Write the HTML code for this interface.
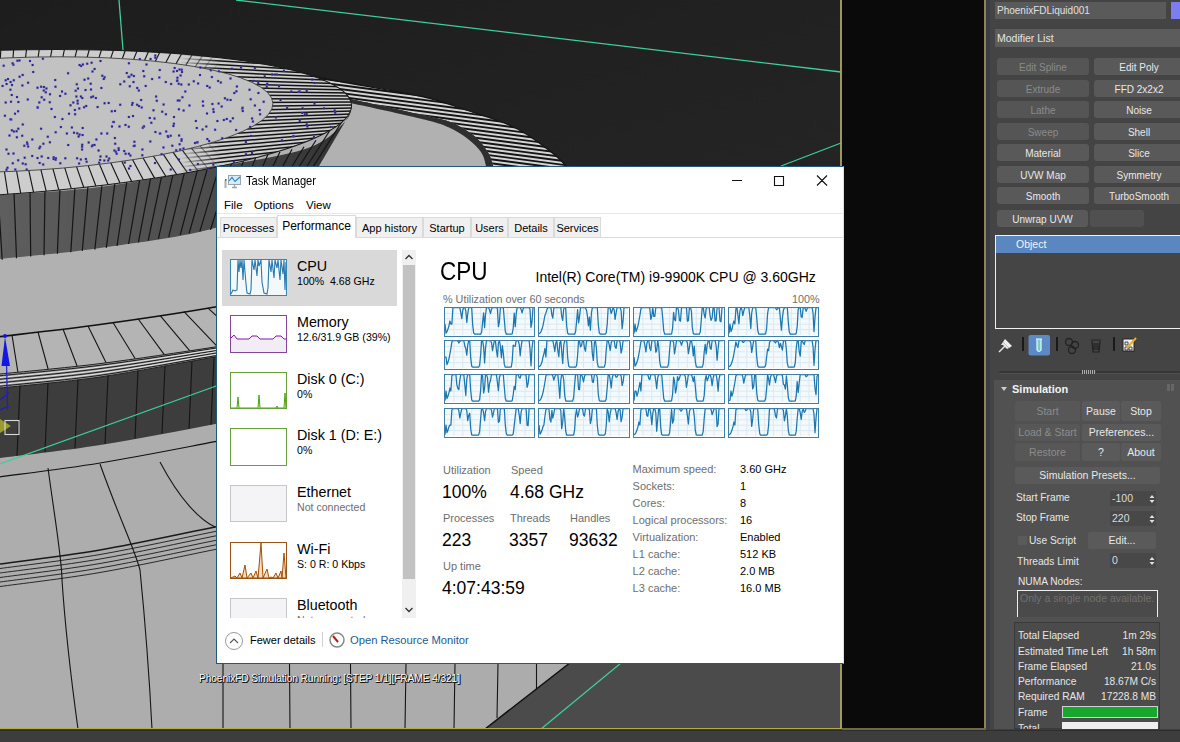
<!DOCTYPE html>
<html><head><meta charset="utf-8"><style>
*{margin:0;padding:0}
body{width:1180px;height:742px;overflow:hidden;position:relative;background:#3d3d3d;font-family:"Liberation Sans",sans-serif}
.abs{position:absolute}
#tm{position:absolute;left:216px;top:166px;width:628px;height:497.5px;background:#fff;box-sizing:border-box;border:1px solid #23587a;border-right-color:#cfe6ee;overflow:hidden;color:#000}
#tm div{position:absolute;white-space:nowrap}
.tmname{font-size:14.3px;line-height:16px}
.tmsub{font-size:10.6px;line-height:13px}
.lbl{font-size:11px;line-height:14px;color:#6e6e6e}
.val{font-size:11px;line-height:14px;color:#000}
.big{font-size:17.5px;line-height:20px;color:#000}
.tab{height:20px;top:50px;box-sizing:border-box;border:1px solid #dadada;border-bottom:none;background:#f0f0f0;font-size:11px;line-height:20px;text-align:center}
#rp{position:absolute;left:986px;top:0;width:194px;height:729px;background:#444;overflow:hidden;color:#ddd;font-family:"Liberation Sans",sans-serif}
#rp div{position:absolute;white-space:nowrap;box-sizing:border-box}
.btn{background:#595959;border-radius:3px;height:17px;font-size:10px;line-height:19px;text-align:center;color:#e8e8e8}
.btn.dis{color:#8a8a8a;background:#555}
.sbtn{background:#5a5a5a;border-radius:2px;height:18px;font-size:10.5px;line-height:18px;text-align:center;color:#e8e8e8}
.sbtn.dis{color:#8c8c8c;background:#575757}
.lab{font-size:10.2px;line-height:16px;color:#e6e6e6}
.spin{background:#484848;height:15px;font-size:10.5px;line-height:15px;color:#dcdcdc;padding-left:2px}

</style></head><body>
<svg width="842" height="729" viewBox="0 0 842 729" style="position:absolute;left:0;top:0">
<defs><linearGradient id="bg" x1="0" y1="0" x2="0.3" y2="1"><stop offset="0" stop-color="#1d1d1d"/><stop offset="1" stop-color="#2c2c2c"/></linearGradient></defs>
<defs><linearGradient id="wallg" x1="0" y1="0" x2="1" y2="0" gradientUnits="objectBoundingBox"><stop offset="0" stop-color="#5e5e5e"/><stop offset="0.6" stop-color="#4c4c4c"/><stop offset="1" stop-color="#303030"/></linearGradient></defs>
<rect x="0" y="0" width="842" height="729" fill="url(#bg)"/>
<path d="M470,729 L590,640 L842,640 L842,729 Z" fill="#4b4b4b"/>
<path d="M250.0,62.0 C256.7,63.3 276.3,67.0 290.0,70.0 C303.7,73.0 310.3,75.7 332.0,80.0 C353.7,84.3 397.7,91.0 420.0,96.0 C442.3,101.0 450.8,105.0 466.0,110.0 C481.2,115.0 498.8,120.2 511.5,126.0 C524.2,131.8 533.1,138.5 542.0,145.0 C550.9,151.5 559.5,157.5 565.0,165.0 C570.5,172.5 573.3,185.8 575.0,190.0 L496,190 L497.0,190.0 C496.3,186.0 494.7,172.5 493.0,166.0 C491.3,159.5 490.3,156.2 487.0,151.0 C483.7,145.8 479.2,139.8 473.0,135.0 C466.8,130.2 458.8,125.4 450.0,122.0 C441.2,118.6 436.7,118.3 420.0,114.5 C403.3,110.7 370.0,103.1 350.0,99.0 C330.0,94.9 308.3,91.5 300.0,90.0 Z" fill="#d4d4d4"/>
<clipPath id="ringclip"><path d="M250.0,62.0 C256.7,63.3 276.3,67.0 290.0,70.0 C303.7,73.0 310.3,75.7 332.0,80.0 C353.7,84.3 397.7,91.0 420.0,96.0 C442.3,101.0 450.8,105.0 466.0,110.0 C481.2,115.0 498.8,120.2 511.5,126.0 C524.2,131.8 533.1,138.5 542.0,145.0 C550.9,151.5 559.5,157.5 565.0,165.0 C570.5,172.5 573.3,185.8 575.0,190.0 L496,190 L497.0,190.0 C496.3,186.0 494.7,172.5 493.0,166.0 C491.3,159.5 490.3,156.2 487.0,151.0 C483.7,145.8 479.2,139.8 473.0,135.0 C466.8,130.2 458.8,125.4 450.0,122.0 C441.2,118.6 436.7,118.3 420.0,114.5 C403.3,110.7 370.0,103.1 350.0,99.0 C330.0,94.9 308.3,91.5 300.0,90.0 Z"/></clipPath>
<g clip-path="url(#ringclip)"><path d="M280,34.4 L600,76.0 M280,38.3 L600,79.9 M280,42.2 L600,83.8 M280,46.1 L600,87.7 M280,50.0 L600,91.6 M280,53.9 L600,95.5 M280,57.8 L600,99.4 M280,61.7 L600,103.3 M280,65.6 L600,107.2 M280,69.5 L600,111.1 M280,73.4 L600,115.0 M280,77.3 L600,118.9 M280,81.2 L600,122.8 M280,85.1 L600,126.7 M280,89.0 L600,130.6 M280,92.9 L600,134.5 M280,96.8 L600,138.4 M280,100.7 L600,142.3 M280,104.6 L600,146.2 M280,108.5 L600,150.1 M280,112.4 L600,154.0 M280,116.3 L600,157.9 M280,120.2 L600,161.8 M280,124.1 L600,165.7 M280,128.0 L600,169.6 M280,131.9 L600,173.5 M280,135.8 L600,177.4 M280,139.7 L600,181.3 M280,143.6 L600,185.2 M280,147.5 L600,189.1 M280,151.4 L600,193.0 M280,155.3 L600,196.9 M280,159.2 L600,200.8 M280,163.1 L600,204.7 M280,167.0 L600,208.6 M280,170.9 L600,212.5 M280,174.8 L600,216.4 M280,178.7 L600,220.3 M280,182.6 L600,224.2 M280,186.5 L600,228.1 M280,190.4 L600,232.0 M280,194.3 L600,235.9 M280,198.2 L600,239.8 M280,202.1 L600,243.7" stroke="#141414" stroke-width="1.9" fill="none"/></g>
<path d="M300.0,90.0 C308.3,91.5 330.0,94.9 350.0,99.0 C370.0,103.1 403.3,110.7 420.0,114.5 C436.7,118.3 441.2,118.6 450.0,122.0 C458.8,125.4 466.8,130.2 473.0,135.0 C479.2,139.8 483.7,145.8 487.0,151.0 C490.3,156.2 491.3,159.5 493.0,166.0 C494.7,172.5 496.3,186.0 497.0,190.0 L488,190 L490.0,190.0 C489.3,186.0 487.5,172.3 486.0,166.0 C484.5,159.7 484.0,156.5 481.0,152.0 C478.0,147.5 473.5,143.2 468.0,139.0 C462.5,134.8 456.0,130.4 448.0,127.0 C440.0,123.6 436.3,122.5 420.0,118.5 C403.7,114.5 370.0,107.1 350.0,103.0 C330.0,98.9 308.3,95.5 300.0,94.0 Z" fill="#2e2e2e"/>
<path d="M250.0,62.0 C256.7,63.3 276.3,67.0 290.0,70.0 C303.7,73.0 310.3,75.7 332.0,80.0 C353.7,84.3 397.7,91.0 420.0,96.0 C442.3,101.0 450.8,105.0 466.0,110.0 C481.2,115.0 498.8,120.2 511.5,126.0 C524.2,131.8 533.1,138.5 542.0,145.0 C550.9,151.5 559.5,157.5 565.0,165.0 C570.5,172.5 573.3,185.8 575.0,190.0" stroke="#151515" stroke-width="1.3" fill="none"/>
<path d="M300.0,94.0 C308.3,95.5 330.0,98.9 350.0,103.0 C370.0,107.1 403.7,114.5 420.0,118.5 C436.3,122.5 440.0,123.6 448.0,127.0 C456.0,130.4 462.5,134.8 468.0,139.0 C473.5,143.2 478.0,147.5 481.0,152.0 C484.0,156.5 484.5,159.7 486.0,166.0 C487.5,172.3 489.3,186.0 490.0,190.0 L492,420 L0,420 L0,150 Z" fill="#b1b1b1"/>
<path d="M0.0,195.0 C16.7,193.7 64.0,191.7 100.0,187.0 C136.0,182.3 181.3,173.5 216.0,167.0 C250.7,160.5 286.4,155.7 308.0,148.0 C329.6,140.3 338.3,128.2 345.5,121.0 C352.7,113.8 350.1,107.7 351.0,105.0 L349,115 L318.6,166.7 C310.5,171.8 287.3,186.8 270.0,197.0 C252.7,207.2 243.3,219.5 215.0,228.0 C186.7,236.5 135.8,242.8 100.0,248.0 C64.2,253.2 16.7,257.2 0.0,259.0 Z" fill="url(#wallg)"/>
<path d="M-2.0,193.0 L2.2,259.8 M14.0,191.9 L16.5,258.2 M30.0,190.6 L30.7,256.6 M45.0,189.4 L44.0,255.2 M60.0,188.2 L57.4,253.7 M75.0,187.0 L70.8,252.2 M88.0,186.0 L82.3,250.9 M102.0,184.7 L94.8,249.6 M115.0,182.4 L106.3,247.9 M127.0,180.3 L117.0,246.0 M140.0,178.1 L128.6,244.0 M151.0,176.2 L138.4,242.3 M162.0,174.3 L148.2,240.6 M173.5,172.3 L158.4,238.8 M185.0,170.3 L168.7,237.1 M198.0,168.1 L180.2,235.0 M208.0,166.4 L189.1,233.5 M220.0,164.2 L199.8,231.6 M232.0,161.7 L210.5,229.8 M244.0,159.2 L221.2,225.5 M256.0,156.7 L231.8,219.5 M268.0,154.3 L242.5,213.5 M280.0,151.8 L253.2,207.5 M292.0,149.3 L263.9,201.4 M304.0,146.8 L274.6,195.2 M316.0,140.2 L285.2,188.5 M330.0,130.2 L297.7,180.7 M342.0,121.5 L308.4,174.1" stroke="#151515" stroke-width="1.2" fill="none"/>
<ellipse cx="-41" cy="124.5" rx="393" ry="72.5" transform="rotate(-2.84 -41 124.5)" fill="#cdcdcd" stroke="#1a1a1a" stroke-width="1"/>
<defs><linearGradient id="mA" x1="0" y1="0" x2="842" y2="0" gradientUnits="userSpaceOnUse"><stop offset="0.214" stop-color="#fff"/><stop offset="0.262" stop-color="#000"/></linearGradient><linearGradient id="mB" x1="0" y1="0" x2="842" y2="0" gradientUnits="userSpaceOnUse"><stop offset="0.214" stop-color="#000"/><stop offset="0.262" stop-color="#fff"/></linearGradient><mask id="maskA" maskUnits="userSpaceOnUse" x="0" y="0" width="842" height="729"><rect x="0" y="0" width="842" height="729" fill="url(#mA)"/></mask><mask id="maskB" maskUnits="userSpaceOnUse" x="0" y="0" width="842" height="729"><rect x="0" y="0" width="842" height="729" fill="url(#mB)"/></mask><clipPath id="discclip"><ellipse cx="-41" cy="124.5" rx="393" ry="72.5" transform="rotate(-2.84 -41 124.5)"/></clipPath></defs>
<g mask="url(#maskA)"><path d="M254.5,158.1 L229.9,136.1 M245.8,160.3 L222.7,138.2 M236.8,162.5 L215.8,141.1 M227.5,164.6 L207.9,143.2 M217.9,166.7 L199.6,145.4 M208.0,168.7 L191.0,147.7 M197.8,170.7 L182.1,149.9 M187.4,172.6 L173.0,152.2 M176.7,174.5 L162.9,153.6 M165.8,176.3 L153.2,155.8 M154.6,178.1 L142.7,157.2 M143.3,179.8 L132.5,159.5 M131.7,181.4 L121.5,160.8 M120.0,183.0 L110.4,162.1 M108.0,184.5 L99.5,164.2 M95.9,186.0 L88.1,165.4 M83.7,187.3 L76.5,166.6 M71.3,188.7 L64.7,167.7 M58.8,189.9 L52.9,168.7 M46.2,191.1 L40.9,169.7 M33.5,192.2 L28.6,169.7 M20.7,193.2 L16.5,170.6 M7.9,194.2 L4.4,171.5 M0.8,50.3 L0.3,58.3 M13.6,50.0 L13.0,58.0 M26.5,49.8 L25.5,57.7 M39.2,49.6 L38.1,57.5 M51.9,49.5 L50.5,57.4 M64.4,49.5 L62.8,57.4 M76.9,49.6 L75.0,57.4 M89.2,49.8 L87.1,57.5 M101.4,50.0 L99.0,57.7 M113.4,50.4 L110.5,58.9 M125.2,50.8 L122.1,59.2 M136.9,51.3 L133.5,59.6 M148.4,51.8 L144.3,61.0 M159.6,52.5 L155.3,61.5 M170.7,53.2 L165.6,63.0 M181.5,54.0 L175.6,64.5 M192.1,54.9 L185.8,65.2 M202.4,55.9 L195.3,66.8 M212.4,56.9 L204.4,68.4 M222.2,58.0 L212.6,70.8 M231.7,59.2 L221.0,72.5 M240.9,60.5 L228.5,74.9 M249.8,61.8 L236.2,76.5 M258.3,63.2 L242.9,78.9" stroke="#161616" stroke-width="1.15" fill="none"/></g>
<g clip-path="url(#discclip)"><g mask="url(#maskB)"><path d="M150,27.2 L360,49.0 M150,31.4 L360,52.0 M150,35.6 L360,54.9 M150,39.8 L360,57.9 M150,44.0 L360,60.8 M150,48.2 L360,63.7 M150,52.4 L360,66.7 M150,56.6 L360,69.6 M150,60.8 L360,72.6 M150,65.0 L360,75.5 M150,69.2 L360,78.4 M150,73.4 L360,81.4 M150,77.6 L360,84.3 M150,81.8 L360,87.3 M150,86.0 L360,90.2 M150,90.2 L360,93.1 M150,94.4 L360,96.1 M150,98.6 L360,99.0 M150,103.0 L360,102.0 M150,107.5 L360,104.9 M150,112.0 L360,107.8 M150,116.5 L360,110.7 M150,121.0 L360,113.7 M150,125.5 L360,116.6 M150,130.0 L360,119.5 M150,134.5 L360,122.4 M150,139.0 L360,125.3 M150,143.5 L360,128.3 M150,148.0 L360,131.2 M150,152.5 L360,134.1 M150,157.0 L360,137.1 M150,161.5 L360,140.0 M150,166.0 L360,142.9 M150,170.5 L360,145.8 M150,175.0 L360,148.8 M150,179.5 L360,151.7 M150,184.0 L360,154.6 M150,188.5 L360,157.5 M150,193.0 L360,160.4 M150,197.5 L360,163.4 M150,202.0 L360,166.3 M150,206.5 L360,169.2 M150,211.0 L360,172.2 M150,215.5 L360,175.1 M150,220.0 L360,178.0 M150,224.5 L360,180.9" stroke="#141414" stroke-width="1.5" fill="none"/></g></g>
<g clip-path="url(#discclip)"><ellipse cx="-41" cy="124.5" rx="390.5" ry="70.0" transform="rotate(-2.84 -41 124.5)" fill="none" stroke="#d6d6d6" stroke-width="5" stroke-opacity="0.0"/></g>
<ellipse cx="8.5" cy="114.7" rx="264.7" ry="56.8" transform="rotate(-2.5 8.5 114.7)" fill="#c2c2c2" stroke="#303030" stroke-width="0.8"/>
<path d="M86.2,62.7h2v2h-2z M26.8,98.6h2v2h-2z M78.1,162.6h2v2h-2z M48.8,101.2h2v2h-2z M197.1,82.5h2v2h-2z M81.3,97.0h2v2h-2z M31.6,64.0h2v2h-2z M103.6,102.3h2v2h-2z M165.2,130.5h2v2h-2z M23.7,156.7h2v2h-2z M128.8,85.3h2v2h-2z M148.8,116.9h2v2h-2z M206.2,84.9h2v2h-2z M112.3,120.9h2v2h-2z M50.5,107.9h2v2h-2z M177.7,82.8h2v2h-2z M36.5,157.1h2v2h-2z M179.2,148.6h2v2h-2z M54.5,85.7h2v2h-2z M249.1,125.9h2v2h-2z M17.3,127.7h2v2h-2z M99.5,60.0h2v2h-2z M221.2,137.2h2v2h-2z M208.1,139.9h2v2h-2z M67.1,72.2h2v2h-2z M180.8,68.7h2v2h-2z M21.7,73.9h2v2h-2z M29.0,60.0h2v2h-2z M25.7,168.4h2v2h-2z M201.6,128.6h2v2h-2z M27.1,145.6h2v2h-2z M196.5,141.3h2v2h-2z M178.1,134.6h2v2h-2z M249.7,98.2h2v2h-2z M248.5,88.8h2v2h-2z M76.1,157.3h2v2h-2z M188.5,104.5h2v2h-2z M90.9,145.2h2v2h-2z M140.7,106.4h2v2h-2z M257.4,92.0h2v2h-2z M125.8,72.1h2v2h-2z M24.7,163.3h2v2h-2z M179.6,74.4h2v2h-2z M54.6,158.7h2v2h-2z M9.5,118.3h2v2h-2z M18.5,59.5h2v2h-2z M127.9,115.9h2v2h-2z M39.2,145.7h2v2h-2z M152.5,109.3h2v2h-2z M42.4,142.8h2v2h-2z M226.4,98.7h2v2h-2z M68.0,112.7h2v2h-2z M15.9,136.3h2v2h-2z M115.7,152.8h2v2h-2z M42.2,163.6h2v2h-2z M160.6,153.2h2v2h-2z M91.5,70.5h2v2h-2z M16.0,96.1h2v2h-2z M36.8,106.7h2v2h-2z M74.1,113.2h2v2h-2z M176.0,79.9h2v2h-2z M46.8,135.8h2v2h-2z M107.7,101.9h2v2h-2z M81.1,145.8h2v2h-2z M38.7,161.9h2v2h-2z M21.4,84.4h2v2h-2z M144.7,84.9h2v2h-2z M7.0,78.1h2v2h-2z M132.0,115.1h2v2h-2z M176.8,99.6h2v2h-2z M7.5,152.8h2v2h-2z M118.5,125.4h2v2h-2z M205.3,125.5h2v2h-2z M258.7,109.1h2v2h-2z M53.9,116.0h2v2h-2z M141.8,126.8h2v2h-2z M124.6,152.7h2v2h-2z M127.8,125.8h2v2h-2z M216.4,120.1h2v2h-2z M133.7,144.7h2v2h-2z M12.5,152.6h2v2h-2z M171.3,144.7h2v2h-2z M54.9,157.3h2v2h-2z M106.2,132.4h2v2h-2z M40.1,127.8h2v2h-2z M76.2,132.3h2v2h-2z M167.2,136.0h2v2h-2z M10.2,118.6h2v2h-2z M90.6,61.8h2v2h-2z M132.5,81.1h2v2h-2z M128.3,75.9h2v2h-2z M4.7,101.5h2v2h-2z M150.3,121.8h2v2h-2z M81.9,63.4h2v2h-2z M136.2,86.9h2v2h-2z M41.9,57.8h2v2h-2z M100.4,132.5h2v2h-2z M100.4,86.9h2v2h-2z M17.1,110.3h2v2h-2z M177.9,108.3h2v2h-2z M214.1,128.8h2v2h-2z M235.1,129.0h2v2h-2z M219.8,81.6h2v2h-2z M12.8,79.2h2v2h-2z M79.8,158.6h2v2h-2z M241.8,110.1h2v2h-2z M131.1,103.8h2v2h-2z M142.9,125.3h2v2h-2z M90.0,88.5h2v2h-2z M38.3,101.4h2v2h-2z M5.6,83.0h2v2h-2z M47.2,157.0h2v2h-2z M140.1,99.0h2v2h-2z M10.9,129.3h2v2h-2z M199.0,74.1h2v2h-2z M217.6,102.5h2v2h-2z M182.5,147.5h2v2h-2z M21.2,134.8h2v2h-2z M87.7,141.4h2v2h-2z M84.5,89.1h2v2h-2z M81.6,134.1h2v2h-2z M21.8,123.5h2v2h-2z M251.9,120.5h2v2h-2z M211.4,103.0h2v2h-2z M8.5,134.5h2v2h-2z M99.1,159.1h2v2h-2z M103.6,76.2h2v2h-2z M166.8,135.0h2v2h-2z M9.6,81.1h2v2h-2z M176.4,76.8h2v2h-2z M4.7,79.3h2v2h-2z M98.1,161.8h2v2h-2z M235.9,85.4h2v2h-2z M94.9,97.1h2v2h-2z M178.5,99.6h2v2h-2z M229.5,77.4h2v2h-2z M141.3,154.2h2v2h-2z M251.1,117.4h2v2h-2z M229.4,120.3h2v2h-2z M169.7,134.8h2v2h-2z M180.6,138.2h2v2h-2z M64.4,92.7h2v2h-2z M119.2,103.8h2v2h-2z M73.0,131.7h2v2h-2z M141.4,148.4h2v2h-2z M93.6,67.9h2v2h-2z M187.8,83.4h2v2h-2z M43.2,98.7h2v2h-2z M132.9,75.1h2v2h-2z M49.0,93.2h2v2h-2z M11.0,84.0h2v2h-2z M172.4,125.0h2v2h-2z M259.1,113.2h2v2h-2z M235.4,90.3h2v2h-2z M201.9,100.5h2v2h-2z M59.9,126.1h2v2h-2z M87.2,77.5h2v2h-2z M101.3,74.8h2v2h-2z M164.9,113.3h2v2h-2z M80.1,65.1h2v2h-2z M127.6,75.8h2v2h-2z M84.9,158.0h2v2h-2z M21.8,162.5h2v2h-2z M233.3,92.1h2v2h-2z M222.9,119.0h2v2h-2z M178.5,68.6h2v2h-2z M158.3,76.6h2v2h-2z M181.0,71.1h2v2h-2z M17.4,101.1h2v2h-2z M129.4,154.6h2v2h-2z M61.4,118.1h2v2h-2z M74.7,89.8h2v2h-2z M1.6,84.9h2v2h-2z M149.3,140.4h2v2h-2z M11.6,62.3h2v2h-2z M78.6,64.1h2v2h-2z M133.4,140.8h2v2h-2z M12.4,63.8h2v2h-2z M10.0,100.7h2v2h-2z M132.8,145.1h2v2h-2z M6.5,166.7h2v2h-2z M142.3,70.1h2v2h-2z M217.1,80.0h2v2h-2z M173.7,67.0h2v2h-2z M11.8,162.3h2v2h-2z M10.8,94.0h2v2h-2z M105.5,155.4h2v2h-2z M79.9,95.6h2v2h-2z M206.0,112.4h2v2h-2z M52.7,156.3h2v2h-2z M76.6,99.7h2v2h-2z M164.8,81.1h2v2h-2z M176.4,79.4h2v2h-2z M54.7,131.3h2v2h-2z M69.5,104.3h2v2h-2z M17.2,159.3h2v2h-2z M54.2,79.1h2v2h-2z M73.9,109.0h2v2h-2z M206.3,138.1h2v2h-2z M40.7,96.3h2v2h-2z M85.2,105.0h2v2h-2z M12.9,130.6h2v2h-2z M172.6,70.5h2v2h-2z M159.2,132.6h2v2h-2z M138.0,105.1h2v2h-2z M136.1,103.7h2v2h-2z M113.4,149.4h2v2h-2z M119.3,83.3h2v2h-2z M36.6,106.2h2v2h-2z M161.2,110.7h2v2h-2z M137.8,89.4h2v2h-2z M208.7,86.5h2v2h-2z M78.6,133.6h2v2h-2z M114.8,150.7h2v2h-2z M44.8,91.3h2v2h-2z M111.0,125.4h2v2h-2z M113.9,137.0h2v2h-2z M194.0,142.1h2v2h-2z M81.1,148.5h2v2h-2z M77.0,87.5h2v2h-2z M143.2,75.3h2v2h-2z M253.9,104.4h2v2h-2z M194.9,120.0h2v2h-2z M27.1,81.7h2v2h-2z M176.0,69.9h2v2h-2z M5.5,148.6h2v2h-2z M114.0,109.9h2v2h-2z M114.2,142.7h2v2h-2z M75.4,95.4h2v2h-2z M220.7,105.6h2v2h-2z M26.4,142.9h2v2h-2z M143.0,125.5h2v2h-2z M95.4,138.4h2v2h-2z M153.5,117.4h2v2h-2z M210.9,76.1h2v2h-2z M117.7,149.0h2v2h-2z M18.6,75.7h2v2h-2z M131.6,101.9h2v2h-2z M110.8,110.3h2v2h-2z M78.3,107.5h2v2h-2z M223.9,97.3h2v2h-2z M48.9,141.3h2v2h-2z M127.9,152.7h2v2h-2z M154.4,131.1h2v2h-2z M195.8,126.9h2v2h-2z M83.1,106.2h2v2h-2z M158.9,132.4h2v2h-2z M75.8,83.3h2v2h-2z M72.3,101.6h2v2h-2z M103.3,159.5h2v2h-2z M155.1,95.6h2v2h-2z M5.5,168.8h2v2h-2z M241.6,106.7h2v2h-2z M31.3,138.4h2v2h-2z M15.6,130.2h2v2h-2z M182.6,109.6h2v2h-2z M241.3,107.6h2v2h-2z M172.9,122.8h2v2h-2z M178.6,143.2h2v2h-2z M32.2,71.0h2v2h-2z M184.3,90.5h2v2h-2z M192.8,80.2h2v2h-2z M92.1,95.4h2v2h-2z M89.7,82.7h2v2h-2z M67.2,144.1h2v2h-2z M99.5,155.5h2v2h-2z M162.5,146.5h2v2h-2z M26.0,141.4h2v2h-2z M36.5,86.7h2v2h-2z M2.7,64.7h2v2h-2z M3.9,114.7h2v2h-2z M31.2,155.0h2v2h-2z M97.6,149.5h2v2h-2z M81.7,127.0h2v2h-2z M107.2,159.5h2v2h-2z M14.0,112.7h2v2h-2z M124.5,123.9h2v2h-2z M23.3,144.8h2v2h-2z M180.3,83.6h2v2h-2z M181.4,96.2h2v2h-2z M9.4,88.7h2v2h-2z M14.3,168.5h2v2h-2z M91.7,144.3h2v2h-2z M81.2,143.8h2v2h-2z M212.7,110.9h2v2h-2z M231.9,117.3h2v2h-2z M93.5,143.9h2v2h-2z M225.8,117.9h2v2h-2z M70.9,126.4h2v2h-2z M112.9,121.1h2v2h-2z M102.8,77.9h2v2h-2z M96.6,106.1h2v2h-2z M145.5,63.4h2v2h-2z M90.2,96.2h2v2h-2z M180.5,139.8h2v2h-2z M40.1,85.8h2v2h-2z M85.6,160.7h2v2h-2z M173.0,116.1h2v2h-2z M229.6,99.0h2v2h-2z M59.3,162.3h2v2h-2z M262.7,100.8h2v2h-2z M83.5,78.7h2v2h-2z M123.2,80.4h2v2h-2z M130.5,73.8h2v2h-2z M123.2,150.1h2v2h-2z M127.9,62.2h2v2h-2z M77.6,135.5h2v2h-2z M76.7,102.4h2v2h-2z M42.8,89.6h2v2h-2z M117.6,147.2h2v2h-2z M61.0,90.6h2v2h-2z M64.3,157.3h2v2h-2z M170.1,83.0h2v2h-2z M175.2,149.2h2v2h-2z M45.4,87.4h2v2h-2z M195.8,141.4h2v2h-2z M108.2,157.4h2v2h-2z M38.4,147.2h2v2h-2z M65.9,132.4h2v2h-2z M162.6,103.4h2v2h-2z M151.1,78.1h2v2h-2z M52.6,157.9h2v2h-2z M212.3,108.3h2v2h-2z M158.8,69.0h2v2h-2z M59.1,94.9h2v2h-2z M16.4,59.8h2v2h-2z M202.1,104.7h2v2h-2z M42.9,86.1h2v2h-2z M155.8,99.8h2v2h-2z M40.7,155.4h2v2h-2z M212.3,163.7h2v2h-2z M129.4,165.1h2v2h-2z M209.8,69.2h2v2h-2z M154.3,54.6h2v2h-2z M292.7,135.2h2v2h-2z M265.8,85.9h2v2h-2z M244.9,140.9h2v2h-2z M217.9,70.2h2v2h-2z M275.7,73.4h2v2h-2z M154.0,162.1h2v2h-2z M123.8,161.5h2v2h-2z M306.4,125.4h2v2h-2z M301.6,107.3h2v2h-2z M253.9,67.1h2v2h-2z M154.3,56.8h2v2h-2z M274.9,116.4h2v2h-2z M305.7,90.1h2v2h-2z M177.9,158.4h2v2h-2z M128.0,167.4h2v2h-2z M263.7,75.3h2v2h-2z M189.2,168.9h2v2h-2z M278.0,85.2h2v2h-2z M297.7,90.9h2v2h-2z M303.9,113.2h2v2h-2z M240.0,66.6h2v2h-2z M274.3,73.6h2v2h-2z M250.0,134.9h2v2h-2z M298.8,120.0h2v2h-2z M149.6,57.9h2v2h-2z M279.5,99.0h2v2h-2z M298.6,90.2h2v2h-2z M323.0,107.2h2v2h-2z M313.6,82.0h2v2h-2z M333.7,109.4h2v2h-2z M271.2,73.4h2v2h-2z M313.0,136.1h2v2h-2z M199.4,66.4h2v2h-2z M245.0,153.3h2v2h-2z M282.9,69.7h2v2h-2z M305.7,113.1h2v2h-2z M196.9,163.0h2v2h-2z M290.3,90.6h2v2h-2z M206.7,167.7h2v2h-2z M329.5,126.0h2v2h-2z M257.2,81.9h2v2h-2z M266.2,82.8h2v2h-2z M232.9,160.9h2v2h-2z M252.2,80.1h2v2h-2z M334.2,111.7h2v2h-2z M230.8,67.8h2v2h-2z M305.7,123.2h2v2h-2z M311.2,78.6h2v2h-2z M169.8,168.5h2v2h-2z M138.8,58.0h2v2h-2z M313.5,102.8h2v2h-2z M251.0,152.0h2v2h-2z M301.2,112.1h2v2h-2z M281.0,139.2h2v2h-2z M286.1,107.0h2v2h-2z M292.3,135.0h2v2h-2z" fill="#1c1a78" stroke="#6a66d8" stroke-width="0.5" stroke-opacity="0.6"/>
<path d="M0.0,336.6 C16.7,334.6 64.2,329.4 100.0,324.5 C135.8,319.6 181.7,312.8 215.0,307.0 C248.3,301.2 285.8,292.8 300.0,290.0 L300.0,333.0 C285.8,335.3 248.3,341.9 215.0,347.0 C181.7,352.1 135.8,359.1 100.0,363.6 C64.2,368.1 16.7,372.3 0.0,374.0 Z" fill="#b4b4b4"/>
<path d="M0.0,374.0 C16.7,372.3 64.2,368.1 100.0,363.6 C135.8,359.1 181.7,352.1 215.0,347.0 C248.3,341.9 285.8,335.3 300.0,333.0 L300.0,343.0 C285.8,345.3 248.3,351.3 215.0,357.0 C181.7,362.7 135.8,371.8 100.0,377.0 C64.2,382.2 16.7,386.2 0.0,388.0 Z" fill="#9a9a9a"/>
<path d="M0.0,375.8 C16.7,374.0 64.2,369.9 100.0,365.3 C135.8,360.7 181.7,353.4 215.0,348.2 C248.3,343.1 285.8,336.6 300.0,334.2" stroke="#1a1a1a" stroke-width="1" fill="none"/>
<path d="M0.0,377.5 C16.7,375.7 64.2,371.6 100.0,367.0 C135.8,362.3 181.7,354.7 215.0,349.5 C248.3,344.3 285.8,337.8 300.0,335.5" stroke="#e6e6e6" stroke-width="1" fill="none"/>
<path d="M0.0,379.2 C16.7,377.5 64.2,373.4 100.0,368.6 C135.8,363.9 181.7,356.1 215.0,350.8 C248.3,345.4 285.8,339.1 300.0,336.8" stroke="#1a1a1a" stroke-width="1" fill="none"/>
<path d="M0.0,381.0 C16.7,379.2 64.2,375.1 100.0,370.3 C135.8,365.5 181.7,357.4 215.0,352.0 C248.3,346.6 285.8,340.3 300.0,338.0" stroke="#e6e6e6" stroke-width="1" fill="none"/>
<path d="M0.0,382.8 C16.7,381.0 64.2,376.9 100.0,372.0 C135.8,367.1 181.7,358.7 215.0,353.2 C248.3,347.8 285.8,341.6 300.0,339.2" stroke="#1a1a1a" stroke-width="1" fill="none"/>
<path d="M0.0,384.5 C16.7,382.7 64.2,378.6 100.0,373.6 C135.8,368.6 181.7,360.0 215.0,354.5 C248.3,349.0 285.8,342.8 300.0,340.5" stroke="#e6e6e6" stroke-width="1" fill="none"/>
<path d="M0.0,386.2 C16.7,384.4 64.2,380.4 100.0,375.3 C135.8,370.2 181.7,361.3 215.0,355.8 C248.3,350.2 285.8,344.1 300.0,341.8" stroke="#1a1a1a" stroke-width="1" fill="none"/>
<path d="M0.0,388.0 C16.7,386.2 64.2,382.2 100.0,377.0 C135.8,371.8 181.7,362.7 215.0,357.0 C248.3,351.3 285.8,345.3 300.0,343.0 L300.0,405.0 C285.8,408.2 248.3,417.3 215.0,424.0 C181.7,430.7 135.8,439.3 100.0,445.0 C64.2,450.7 16.7,455.8 0.0,458.0 Z" fill="#3d3d3d"/>
<path d="M0.0,458.0 C16.7,455.8 64.2,450.7 100.0,445.0 C135.8,439.3 181.7,430.7 215.0,424.0 C248.3,417.3 285.8,408.2 300.0,405.0 L300,729 L0,729 Z" fill="#adadad"/>
<path d="M0.0,336.6 C16.7,334.6 64.2,329.4 100.0,324.5 C135.8,319.6 181.7,312.8 215.0,307.0 C248.3,301.2 285.8,292.8 300.0,290.0" stroke="#111" stroke-width="1.6" fill="none"/>
<path d="M0.0,374.0 C16.7,372.3 64.2,368.1 100.0,363.6 C135.8,359.1 181.7,352.1 215.0,347.0 C248.3,341.9 285.8,335.3 300.0,333.0" stroke="#222" stroke-width="1" fill="none"/>
<path d="M0.0,388.0 C16.7,386.2 64.2,382.2 100.0,377.0 C135.8,371.8 181.7,362.7 215.0,357.0 C248.3,351.3 285.8,345.3 300.0,343.0" stroke="#222" stroke-width="1" fill="none"/>
<path d="M0.0,476.8 C16.7,474.5 64.2,468.9 100.0,463.0 C135.8,457.1 181.7,448.0 215.0,441.7 C248.3,435.4 285.8,427.8 300.0,425.0" stroke="#111" stroke-width="1.2" fill="none"/>
<path d="M12.0,335.1 L17.9,372.1 M38.0,332.0 L48.1,369.0 M63.0,329.0 L77.1,366.0 M88.0,326.0 L106.1,362.7 M113.0,322.5 L135.1,358.5 M138.0,318.7 L164.1,354.4 M160.0,315.4 L189.6,350.7 M184.0,311.7 L217.4,346.6 M208.0,308.1 L245.3,342.0 M232.0,303.6 L273.1,337.4 M20.0,385.8 L17.0,455.8 M48.0,382.7 L45.0,452.1 M78.0,379.4 L75.0,448.2 M108.0,375.6 L105.0,444.1 M138.0,370.4 L135.0,438.6 M165.0,365.7 L162.0,433.7 M192.0,361.0 L189.0,428.7 M214.0,357.2 L211.0,424.7" stroke="#151515" stroke-width="1.1" fill="none"/>
<path d="M0.0,564.0 C16.7,561.7 64.2,556.2 100.0,550.0 C135.8,543.8 181.7,533.7 215.0,527.0 C248.3,520.3 285.8,512.8 300.0,510.0" stroke="#1a1a1a" stroke-width="1.4" fill="none"/>
<path d="M0.0,568.5 C16.7,566.2 64.2,560.7 100.0,554.5 C135.8,548.3 181.7,538.2 215.0,531.5 C248.3,524.8 285.8,517.3 300.0,514.5" stroke="#1a1a1a" stroke-width="0.9" fill="none"/>
<path d="M0.0,573.0 C16.7,570.7 64.2,565.2 100.0,559.0 C135.8,552.8 181.7,542.7 215.0,536.0 C248.3,529.3 285.8,521.8 300.0,519.0" stroke="#1a1a1a" stroke-width="0.9" fill="none"/>
<path d="M0.0,577.5 C16.7,575.2 64.2,569.7 100.0,563.5 C135.8,557.3 181.7,547.2 215.0,540.5 C248.3,533.8 285.8,526.3 300.0,523.5" stroke="#1a1a1a" stroke-width="0.9" fill="none"/>
<path d="M0.0,582.0 C16.7,579.7 64.2,574.2 100.0,568.0 C135.8,561.8 181.7,551.7 215.0,545.0 C248.3,538.3 285.8,530.8 300.0,528.0" stroke="#1a1a1a" stroke-width="0.9" fill="none"/>
<path d="M0.0,586.5 C16.7,584.2 64.2,578.7 100.0,572.5 C135.8,566.3 181.7,556.2 215.0,549.5 C248.3,542.8 285.8,535.3 300.0,532.5" stroke="#1a1a1a" stroke-width="0.9" fill="none"/>
<path d="M48,468 C55,520 62,560 62,580 C66,640 74,700 78,729 M100,464 C120,520 135,550 140,570 C145,620 150,690 152,729 M160,462 C180,500 200,520 215,527" stroke="#151515" stroke-width="1.1" fill="none"/>
<path d="M216,655 L580,655 L485,729 L216,729 Z" fill="#acacac"/>
<path d="M580,655 L485,729" stroke="#111" stroke-width="1.5"/>
<path d="M223,663 L223,729 M289.5,663 L290,729 M350.5,663 L351,729 M406,663 L405,729 M455,663 L454,729 M498,663 L497,718 M536.5,663 L536.5,690" stroke="#151515" stroke-width="1.1" fill="none"/>
<path d="M119,0 L123,50 M236,0 L841,72 M781,166 L841,143 M0,464 L230,381 M541,729 L621,663" stroke="#3ccf98" stroke-width="1.3" fill="none"/>
<path d="M6.5,360 L7.5,410 M0,400 L9,393 M0,410 L9,406" stroke="#1c1cd0" stroke-width="1.2" fill="none"/><path d="M1.5,366 L5,337 L10,366 Z" fill="#1414e6"/><circle cx="5" cy="336" r="2" fill="#1414e6"/>
<path d="M0,419 L11,426 L0,433 Z" fill="#9c9c2c"/><rect x="5" y="420.5" width="14" height="14" fill="none" stroke="#d8d8d8" stroke-width="1.1"/>
<path d="M841,0 L841,728.5" stroke="#aaa660" stroke-width="1.8" fill="none"/><path d="M0,729 L842,729" stroke="#b4ac48" stroke-width="2.2" fill="none"/>
</svg>
<div class="abs" style="left:842px;top:0;width:143px;height:729px;background:#0a0a0a"></div>
<div class="abs" style="left:983.5px;top:0;width:2.2px;height:730px;background:#8c8256"></div>
<div class="abs" style="left:842px;top:728px;width:144px;height:2px;background:#6e6a48"></div>
<div class="abs" style="left:0;top:730px;width:1180px;height:12px;background:#3d3d3d;border-top:1px solid #2e2e2e;box-sizing:border-box"></div>

<div id="tm">
  <svg width="18" height="15" style="position:absolute;left:7px;top:7px"><rect x="4.5" y="1.5" width="12" height="9" fill="#d6ecf8" stroke="#9aa4ab" stroke-width="1"/><path d="M5,7 L8,3.5 L11,7.5 L16,3" stroke="#2a84c0" stroke-width="1.1" fill="none"/><path d="M8,13.5 H13 M10.5,11 V13" stroke="#9aa4ab" stroke-width="1.3"/><rect x="0.5" y="6" width="2" height="8" fill="#a8aeb2"/><rect x="1" y="5" width="1.5" height="1.5" fill="#4a6a40"/></svg>
  <div style="left:28.5px;top:7px;font-size:12.4px;line-height:15px;transform:scaleX(0.9);transform-origin:0 0">Task Manager</div>
  <svg width="110" height="14" style="position:absolute;left:515px;top:6px"><path d="M0,7.5 H10 M42.5,3.5 h9 v9 h-9 z M85,2.5 L95,12.5 M95,2.5 L85,12.5" stroke="#111" stroke-width="1.1" fill="none"/></svg>
  <div style="left:7px;top:31px;font-size:11.5px;line-height:14px">File</div>
  <div style="left:37px;top:31px;font-size:11.5px;line-height:14px">Options</div>
  <div style="left:89px;top:31px;font-size:11.5px;line-height:14px">View</div>
  <div style="left:0;top:46px;width:627px;height:1px;background:#e8e8e8"></div>
  <div style="left:0;top:70px;width:627px;height:1px;background:#dadada"></div>
  <div class="tab" style="left:3px;width:57px">Processes</div>
  <div class="tab" style="left:60px;width:79px;top:48px;height:23px;background:#fff;line-height:20px;font-size:12px">Performance</div>
  <div class="tab" style="left:139px;width:67px">App history</div>
  <div class="tab" style="left:206px;width:48px">Startup</div>
  <div class="tab" style="left:254px;width:37px">Users</div>
  <div class="tab" style="left:291px;width:46px">Details</div>
  <div class="tab" style="left:337px;width:47px">Services</div>
  <div style="left:5px;top:83px;width:175px;height:56px;background:#d9d9d9"></div>
  <div style="left:0;top:0;width:200px;height:451px;overflow:hidden">
<div style="position:absolute;left:12.8px;top:91.5px;width:57.5px;height:37.5px;box-sizing:border-box;border:1px solid #3585b8;background:#f1f6fa;overflow:hidden"><svg width="55" height="36" style="position:absolute;left:0;top:0"><rect width="55" height="36" fill="#f3f8fb"/><polyline points="0,34 2,30 4,31 6,30 7,0 8,12 9,0 10,8 11,0 12,20 13,0 15,24 16,33 19,34 20,30 21,0 23,10 24,0 26,16 27,0 28,6 30,0 31,22 33,33 36,34 37,28 38,0 40,12 41,0 43,18 44,0 46,8 47,0 49,20 50,0 52,14 53,0 54,30 55,2" fill="none" stroke="#2a7ab0" stroke-width="1.1"/></svg></div>
<div class="tmname" style="left:80px;top:90.5px">CPU</div>
<div class="tmsub" style="left:80px;top:107.5px;">100%&nbsp; 4.68 GHz</div>
<div style="position:absolute;left:12.8px;top:148.1px;width:57.5px;height:37.5px;box-sizing:border-box;border:1px solid #86449c;background:#ffffff;overflow:hidden"><svg width="55" height="36" style="position:absolute;left:0;top:0"><path d="M0,22 L3,19 L6,23 L18,23 L21,20 L26,20 L29,23 L42,23 L45,20 L50,20 L53,23 L55,23 L55,36 L0,36Z" fill="#f2edf5"/><path d="M0,22 L3,19 L6,23 L18,23 L21,20 L26,20 L29,23 L42,23 L45,20 L50,20 L53,23 L55,23" stroke="#8b12ae" stroke-width="1" fill="none"/></svg></div>
<div class="tmname" style="left:80px;top:147.1px">Memory</div>
<div class="tmsub" style="left:80px;top:164.1px;">12.6/31.9 GB (39%)</div>
<div style="position:absolute;left:12.8px;top:204.7px;width:57.5px;height:37.5px;box-sizing:border-box;border:1px solid #68a03c;background:#ffffff;overflow:hidden"><svg width="55" height="36" style="position:absolute;left:0;top:0"><path d="M0,35 L6,35 L7,24 L8,35 L27,35 L28,22 L29,35 L45,35 L46,33 L47,35 L53,35 L54,20 L55,35" stroke="#4da60c" stroke-width="1" fill="#d8f0c8"/></svg></div>
<div class="tmname" style="left:80px;top:203.7px">Disk 0 (C:)</div>
<div class="tmsub" style="left:80px;top:220.7px;">0%</div>
<div style="position:absolute;left:12.8px;top:261.3px;width:57.5px;height:37.5px;box-sizing:border-box;border:1px solid #68a03c;background:#ffffff;overflow:hidden"></div>
<div class="tmname" style="left:80px;top:260.3px">Disk 1 (D: E:)</div>
<div class="tmsub" style="left:80px;top:277.3px;">0%</div>
<div style="position:absolute;left:12.8px;top:317.9px;width:57.5px;height:37.5px;box-sizing:border-box;border:1px solid #c6c6c6;background:#f4f4f6;overflow:hidden"></div>
<div class="tmname" style="left:80px;top:316.9px">Ethernet</div>
<div class="tmsub" style="left:80px;top:333.9px;color:#6d6d6d">Not connected</div>
<div style="position:absolute;left:12.8px;top:374.5px;width:57.5px;height:37.5px;box-sizing:border-box;border:1px solid #9a5416;background:#ffffff;overflow:hidden"><svg width="55" height="36" style="position:absolute;left:0;top:0"><path d="M0,35 L4,33 L6,35 L9,30 L11,35 L14,22 L16,35 L20,30 L22,35 L25,28 L27,35 L30,0 L32,35 L36,26 L38,35 L40,34 L42,35 L45,30 L47,35 L50,28 L51,35 L53,10 L55,35 Z" stroke="#a74f01" stroke-width="1" fill="#f1dcc6"/></svg></div>
<div class="tmname" style="left:80px;top:373.5px">Wi-Fi</div>
<div class="tmsub" style="left:80px;top:390.5px;">S: 0 R: 0 Kbps</div>
<div style="position:absolute;left:12.8px;top:431.1px;width:57.5px;height:37.5px;box-sizing:border-box;border:1px solid #c6c6c6;background:#f4f4f6;overflow:hidden"></div>
<div class="tmname" style="left:80px;top:430.1px">Bluetooth</div>
<div class="tmsub" style="left:80px;top:447.1px;color:#6d6d6d">Not connected</div></div>
  <div style="left:185px;top:83px;width:14px;height:368px;background:#f0f0f0"></div>
  <div style="left:186px;top:98px;width:12px;height:314px;background:#c2c2c2"></div>
  <svg width="14" height="368" style="position:absolute;left:185px;top:83px"><path d="M3.5,9 L7,5.5 L10.5,9 M3.5,358 L7,361.5 L10.5,358" stroke="#333" stroke-width="1.3" fill="none"/></svg>
  <div style="left:185px;top:451px;width:20px;height:0"></div>
  <div style="left:222.5px;top:90px;font-size:25px;line-height:28px;transform:scaleX(0.9);transform-origin:0 0">CPU</div>
  <div style="left:318.5px;top:101.5px;font-size:14px;line-height:17px">Intel(R) Core(TM) i9-9900K CPU @ 3.60GHz</div>
  <div class="lbl" style="left:226px;top:125px;font-size:10.8px">% Utilization over 60 seconds</div>
  <div class="lbl" style="left:575px;top:125px;font-size:10.8px">100%</div>
  <div style="position:absolute;left:226.5px;top:140.3px;width:91.5px;height:30px;border:1.5px solid #3d7fa8;box-sizing:border-box;overflow:hidden"><svg width="89" height="27" style="position:absolute;left:0;top:0"><rect width="89" height="27" fill="#f4f9fc"/><path d="M0,5.4H89 M0,10.8H89 M0,16.2H89 M0,21.6H89 M8.9,0V27 M17.8,0V27 M26.7,0V27 M35.6,0V27 M44.5,0V27 M53.4,0V27 M62.3,0V27 M71.2,0V27 M80.1,0V27" stroke="#dae9f2" stroke-width="1" fill="none"/><polyline points="0.0,16.0 1.0,25.1 2.0,23.6 3.0,21.1 4.0,17.6 4.9,13.0 5.9,16.0 6.9,16.0 7.9,-0.5 8.9,-0.5 9.9,-0.5 10.9,-0.5 11.9,-0.5 12.9,-0.5 13.8,-0.5 14.8,-0.5 15.8,4.6 16.8,10.7 17.8,2.0 18.8,-0.5 19.8,-0.5 20.8,2.9 21.8,14.5 22.7,6.2 23.7,-0.5 24.7,-0.5 25.7,-0.5 26.7,-0.5 27.7,17.1 28.7,25.1 29.7,26.2 30.7,26.2 31.6,26.2 32.6,26.2 33.6,26.2 34.6,26.2 35.6,26.2 36.6,24.2 37.6,14.4 38.6,4.9 39.6,19.6 40.5,7.0 41.5,-0.5 42.5,-0.5 43.5,-0.5 44.5,1.9 45.5,5.6 46.5,1.1 47.5,-0.5 48.5,-0.5 49.4,-0.5 50.4,-0.5 51.4,-0.5 52.4,0.7 53.4,18.7 54.4,14.2 55.4,-0.5 56.4,-0.5 57.4,-0.5 58.3,-0.5 59.3,11.6 60.3,23.2 61.3,26.2 62.3,26.2 63.3,26.2 64.3,26.2 65.3,26.2 66.3,26.2 67.2,25.8 68.2,20.3 69.2,5.2 70.2,18.6 71.2,5.7 72.2,-0.5 73.2,-0.5 74.2,-0.5 75.2,-0.5 76.1,1.4 77.1,4.8 78.1,0.9 79.1,-0.5 80.1,-0.5 81.1,-0.5 82.1,-0.5 83.1,-0.5 84.1,-0.5 85.0,1.2 86.0,19.4 87.0,13.7 88.0,-0.5 89.0,-0.5" fill="none" stroke="#1b77b0" stroke-width="1.25" stroke-linejoin="round"/></svg></div><div style="position:absolute;left:321.3px;top:140.3px;width:91.5px;height:30px;border:1.5px solid #3d7fa8;box-sizing:border-box;overflow:hidden"><svg width="89" height="27" style="position:absolute;left:0;top:0"><rect width="89" height="27" fill="#f4f9fc"/><path d="M0,5.4H89 M0,10.8H89 M0,16.2H89 M0,21.6H89 M8.9,0V27 M17.8,0V27 M26.7,0V27 M35.6,0V27 M44.5,0V27 M53.4,0V27 M62.3,0V27 M71.2,0V27 M80.1,0V27" stroke="#dae9f2" stroke-width="1" fill="none"/><polyline points="0.0,25.6 1.0,25.1 2.0,23.6 3.0,21.1 4.0,17.6 4.9,13.0 5.9,7.5 6.9,5.2 7.9,1.6 8.9,-0.5 9.9,-0.5 10.9,-0.5 11.9,-0.5 12.9,7.1 13.8,10.1 14.8,0.4 15.8,-0.5 16.8,-0.5 17.8,-0.5 18.8,-0.5 19.8,-0.5 20.8,-0.5 21.8,-0.5 22.7,8.2 23.7,12.5 24.7,1.0 25.7,-0.5 26.7,0.0 27.7,18.0 28.7,25.3 29.7,26.2 30.7,26.2 31.6,26.2 32.6,26.2 33.6,26.2 34.6,26.2 35.6,26.2 36.6,23.8 37.6,13.3 38.6,1.7 39.6,14.9 40.5,8.9 41.5,-0.5 42.5,-0.5 43.5,-0.5 44.5,-0.5 45.5,-0.5 46.5,0.2 47.5,2.1 48.5,8.6 49.4,17.8 50.4,9.2 51.4,22.2 52.4,5.0 53.4,-0.5 54.4,-0.5 55.4,-0.5 56.4,-0.5 57.4,-0.5 58.3,-0.5 59.3,16.5 60.3,24.9 61.3,26.2 62.3,26.2 63.3,26.2 64.3,26.2 65.3,26.2 66.3,26.2 67.2,24.9 68.2,16.5 69.2,-0.5 70.2,-0.5 71.2,0.7 72.2,5.5 73.2,2.5 74.2,-0.5 75.2,2.1 76.1,11.4 77.1,5.0 78.1,-0.5 79.1,-0.5 80.1,-0.5 81.1,-0.5 82.1,2.4 83.1,20.6 84.1,12.6 85.0,-0.5 86.0,-0.5 87.0,-0.5 88.0,-0.5 89.0,-0.5" fill="none" stroke="#1b77b0" stroke-width="1.25" stroke-linejoin="round"/></svg></div><div style="position:absolute;left:416.2px;top:140.3px;width:91.5px;height:30px;border:1.5px solid #3d7fa8;box-sizing:border-box;overflow:hidden"><svg width="89" height="27" style="position:absolute;left:0;top:0"><rect width="89" height="27" fill="#f4f9fc"/><path d="M0,5.4H89 M0,10.8H89 M0,16.2H89 M0,21.6H89 M8.9,0V27 M17.8,0V27 M26.7,0V27 M35.6,0V27 M44.5,0V27 M53.4,0V27 M62.3,0V27 M71.2,0V27 M80.1,0V27" stroke="#dae9f2" stroke-width="1" fill="none"/><polyline points="0.0,25.6 1.0,16.0 2.0,23.6 3.0,21.1 4.0,17.6 4.9,13.0 5.9,7.5 6.9,0.9 7.9,-0.5 8.9,-0.5 9.9,-0.5 10.9,-0.5 11.9,-0.5 12.9,-0.5 13.8,-0.5 14.8,-0.5 15.8,0.5 16.8,11.3 17.8,8.1 18.8,-0.5 19.8,8.4 20.8,8.5 21.8,-0.5 22.7,-0.5 23.7,-0.5 24.7,-0.5 25.7,-0.5 26.7,-0.5 27.7,-0.5 28.7,10.0 29.7,22.6 30.7,26.1 31.6,26.2 32.6,26.2 33.6,26.2 34.6,26.2 35.6,26.2 36.6,26.2 37.6,25.8 38.6,20.1 39.6,4.4 40.5,11.3 41.5,12.9 42.5,-0.5 43.5,-0.5 44.5,2.5 45.5,12.5 46.5,13.1 47.5,-0.5 48.5,-0.5 49.4,-0.5 50.4,-0.5 51.4,-0.5 52.4,-0.5 53.4,13.2 54.4,12.7 55.4,-0.5 56.4,-0.5 57.4,2.8 58.3,19.4 59.3,25.6 60.3,26.2 61.3,26.2 62.3,26.2 63.3,26.2 64.3,26.2 65.3,26.2 66.3,23.7 67.2,13.0 68.2,-0.5 69.2,-0.5 70.2,6.5 71.2,10.0 72.2,0.7 73.2,-0.5 74.2,-0.5 75.2,-0.2 76.1,7.8 77.1,12.3 78.1,9.9 79.1,-0.5 80.1,-0.5 81.1,12.9 82.1,12.8 83.1,-0.5 84.1,-0.5 85.0,-0.5 86.0,13.1 87.0,13.8 88.0,-0.5 89.0,-0.5" fill="none" stroke="#1b77b0" stroke-width="1.25" stroke-linejoin="round"/></svg></div><div style="position:absolute;left:510.5px;top:140.3px;width:91.5px;height:30px;border:1.5px solid #3d7fa8;box-sizing:border-box;overflow:hidden"><svg width="89" height="27" style="position:absolute;left:0;top:0"><rect width="89" height="27" fill="#f4f9fc"/><path d="M0,5.4H89 M0,10.8H89 M0,16.2H89 M0,21.6H89 M8.9,0V27 M17.8,0V27 M26.7,0V27 M35.6,0V27 M44.5,0V27 M53.4,0V27 M62.3,0V27 M71.2,0V27 M80.1,0V27" stroke="#dae9f2" stroke-width="1" fill="none"/><polyline points="0.0,25.6 1.0,16.0 2.0,23.6 3.0,21.1 4.0,16.0 4.9,13.0 5.9,16.0 6.9,0.9 7.9,-0.5 8.9,6.8 9.9,15.8 10.9,3.2 11.9,-0.5 12.9,1.5 13.8,7.7 14.8,3.0 15.8,-0.5 16.8,-0.5 17.8,-0.5 18.8,-0.5 19.8,-0.5 20.8,7.6 21.8,20.5 22.7,5.0 23.7,-0.5 24.7,-0.5 25.7,-0.5 26.7,-0.5 27.7,9.0 28.7,22.2 29.7,26.1 30.7,26.2 31.6,26.2 32.6,26.2 33.6,26.2 34.6,26.2 35.6,26.2 36.6,25.9 37.6,20.7 38.6,5.6 39.6,-0.5 40.5,-0.5 41.5,-0.5 42.5,-0.5 43.5,-0.5 44.5,-0.5 45.5,-0.5 46.5,-0.3 47.5,1.8 48.5,1.0 49.4,-0.5 50.4,-0.5 51.4,11.0 52.4,22.1 53.4,9.8 54.4,2.5 55.4,-0.5 56.4,-0.5 57.4,-0.5 58.3,-0.5 59.3,14.1 60.3,24.1 61.3,26.2 62.3,26.2 63.3,26.2 64.3,26.2 65.3,26.2 66.3,26.2 67.2,25.5 68.2,18.6 69.2,1.1 70.2,-0.5 71.2,-0.5 72.2,9.0 73.2,9.3 74.2,-0.5 75.2,-0.5 76.1,0.6 77.1,3.3 78.1,0.7 79.1,-0.5 80.1,-0.5 81.1,-0.5 82.1,-0.5 83.1,-0.5 84.1,5.5 85.0,23.7 86.0,9.4 87.0,-0.5 88.0,-0.5 89.0,-0.5" fill="none" stroke="#1b77b0" stroke-width="1.25" stroke-linejoin="round"/></svg></div><div style="position:absolute;left:226.5px;top:173.3px;width:91.5px;height:30px;border:1.5px solid #3d7fa8;box-sizing:border-box;overflow:hidden"><svg width="89" height="27" style="position:absolute;left:0;top:0"><rect width="89" height="27" fill="#f4f9fc"/><path d="M0,5.4H89 M0,10.8H89 M0,16.2H89 M0,21.6H89 M8.9,0V27 M17.8,0V27 M26.7,0V27 M35.6,0V27 M44.5,0V27 M53.4,0V27 M62.3,0V27 M71.2,0V27 M80.1,0V27" stroke="#dae9f2" stroke-width="1" fill="none"/><polyline points="0.0,16.0 1.0,16.0 2.0,23.6 3.0,21.1 4.0,17.6 4.9,13.0 5.9,7.5 6.9,0.9 7.9,-0.5 8.9,-0.5 9.9,-0.5 10.9,-0.5 11.9,-0.5 12.9,0.1 13.8,2.0 14.8,0.6 15.8,-0.5 16.8,-0.5 17.8,-0.5 18.8,-0.5 19.8,5.0 20.8,7.8 21.8,14.1 22.7,4.4 23.7,-0.5 24.7,-0.5 25.7,17.2 26.7,25.1 27.7,26.2 28.7,26.2 29.7,26.2 30.7,26.2 31.6,26.2 32.6,26.2 33.6,26.2 34.6,24.2 35.6,14.3 36.6,-0.5 37.6,-0.5 38.6,5.7 39.6,22.0 40.5,7.6 41.5,-0.5 42.5,-0.5 43.5,-0.5 44.5,-0.5 45.5,-0.5 46.5,1.7 47.5,9.6 48.5,4.1 49.4,-0.5 50.4,-0.5 51.4,9.0 52.4,15.9 53.4,2.1 54.4,-0.5 55.4,5.1 56.4,16.8 57.4,4.6 58.3,12.0 59.3,23.4 60.3,26.2 61.3,26.2 62.3,26.2 63.3,26.2 64.3,26.2 65.3,26.2 66.3,25.8 67.2,20.0 68.2,4.1 69.2,5.0 70.2,5.3 71.2,-0.5 72.2,-0.5 73.2,-0.5 74.2,3.3 75.2,14.8 76.1,5.9 77.1,-0.5 78.1,-0.5 79.1,-0.5 80.1,-0.5 81.1,-0.5 82.1,-0.5 83.1,-0.5 84.1,-0.5 85.0,7.7 86.0,24.8 87.0,7.0 88.0,-0.5 89.0,-0.5" fill="none" stroke="#1b77b0" stroke-width="1.25" stroke-linejoin="round"/></svg></div><div style="position:absolute;left:321.3px;top:173.3px;width:91.5px;height:30px;border:1.5px solid #3d7fa8;box-sizing:border-box;overflow:hidden"><svg width="89" height="27" style="position:absolute;left:0;top:0"><rect width="89" height="27" fill="#f4f9fc"/><path d="M0,5.4H89 M0,10.8H89 M0,16.2H89 M0,21.6H89 M8.9,0V27 M17.8,0V27 M26.7,0V27 M35.6,0V27 M44.5,0V27 M53.4,0V27 M62.3,0V27 M71.2,0V27 M80.1,0V27" stroke="#dae9f2" stroke-width="1" fill="none"/><polyline points="0.0,25.6 1.0,25.1 2.0,23.6 3.0,21.1 4.0,16.0 4.9,13.0 5.9,7.5 6.9,16.0 7.9,-0.5 8.9,-0.5 9.9,-0.5 10.9,-0.5 11.9,-0.5 12.9,-0.5 13.8,-0.5 14.8,4.5 15.8,10.5 16.8,2.0 17.8,-0.5 18.8,9.1 19.8,15.7 20.8,2.0 21.8,-0.5 22.7,10.6 23.7,22.5 24.7,4.4 25.7,-0.5 26.7,-0.5 27.7,-0.5 28.7,16.8 29.7,25.0 30.7,26.2 31.6,26.2 32.6,26.2 33.6,26.2 34.6,26.2 35.6,26.2 36.6,26.2 37.6,24.4 38.6,14.8 39.6,-0.5 40.5,-0.3 41.5,5.8 42.5,4.6 43.5,-0.5 44.5,-0.5 45.5,7.3 46.5,10.2 47.5,0.3 48.5,-0.5 49.4,-0.5 50.4,-0.5 51.4,-0.5 52.4,-0.5 53.4,13.3 54.4,19.4 55.4,1.5 56.4,-0.5 57.4,7.1 58.3,21.4 59.3,26.0 60.3,26.2 61.3,26.2 62.3,26.2 63.3,26.2 64.3,26.2 65.3,26.1 66.3,22.4 67.2,9.4 68.2,-0.5 69.2,-0.5 70.2,3.9 71.2,9.4 72.2,1.8 73.2,-0.5 74.2,-0.5 75.2,-0.5 76.1,5.8 77.1,7.3 78.1,-0.2 79.1,-0.5 80.1,-0.5 81.1,1.0 82.1,12.0 83.1,7.8 84.1,-0.5 85.0,-0.5 86.0,-0.5 87.0,-0.5 88.0,-0.5 89.0,-0.5" fill="none" stroke="#1b77b0" stroke-width="1.25" stroke-linejoin="round"/></svg></div><div style="position:absolute;left:416.2px;top:173.3px;width:91.5px;height:30px;border:1.5px solid #3d7fa8;box-sizing:border-box;overflow:hidden"><svg width="89" height="27" style="position:absolute;left:0;top:0"><rect width="89" height="27" fill="#f4f9fc"/><path d="M0,5.4H89 M0,10.8H89 M0,16.2H89 M0,21.6H89 M8.9,0V27 M17.8,0V27 M26.7,0V27 M35.6,0V27 M44.5,0V27 M53.4,0V27 M62.3,0V27 M71.2,0V27 M80.1,0V27" stroke="#dae9f2" stroke-width="1" fill="none"/><polyline points="0.0,16.0 1.0,25.1 2.0,23.6 3.0,21.1 4.0,17.6 4.9,13.0 5.9,7.5 6.9,0.9 7.9,-0.5 8.9,-0.5 9.9,-0.5 10.9,4.4 11.9,10.9 12.9,2.2 13.8,-0.5 14.8,-0.5 15.8,7.2 16.8,9.5 17.8,0.1 18.8,-0.5 19.8,-0.5 20.8,-0.4 21.8,11.2 22.7,9.6 23.7,-0.5 24.7,5.2 25.7,20.5 26.7,25.9 27.7,26.2 28.7,26.2 29.7,26.2 30.7,26.2 31.6,26.2 32.6,26.2 33.6,26.1 34.6,22.3 35.6,9.3 36.6,-0.5 37.6,-0.5 38.6,-0.5 39.6,1.8 40.5,12.9 41.5,7.0 42.5,-0.5 43.5,-0.5 44.5,-0.5 45.5,-0.5 46.5,1.1 47.5,4.2 48.5,0.9 49.4,-0.5 50.4,-0.5 51.4,-0.5 52.4,-0.5 53.4,1.9 54.4,12.7 55.4,6.6 56.4,-0.5 57.4,-0.5 58.3,4.4 59.3,14.9 60.3,5.1 61.3,20.5 62.3,25.9 63.3,26.2 64.3,26.2 65.3,26.2 66.3,26.2 67.2,26.2 68.2,26.2 69.2,23.1 70.2,11.2 71.2,3.4 72.2,12.9 73.2,4.0 74.2,-0.5 75.2,-0.5 76.1,7.1 77.1,8.4 78.1,-0.4 79.1,-0.5 80.1,-0.5 81.1,-0.5 82.1,4.3 83.1,19.2 84.1,7.8 85.0,-0.5 86.0,-0.5 87.0,-0.5 88.0,-0.5 89.0,-0.5" fill="none" stroke="#1b77b0" stroke-width="1.25" stroke-linejoin="round"/></svg></div><div style="position:absolute;left:510.5px;top:173.3px;width:91.5px;height:30px;border:1.5px solid #3d7fa8;box-sizing:border-box;overflow:hidden"><svg width="89" height="27" style="position:absolute;left:0;top:0"><rect width="89" height="27" fill="#f4f9fc"/><path d="M0,5.4H89 M0,10.8H89 M0,16.2H89 M0,21.6H89 M8.9,0V27 M17.8,0V27 M26.7,0V27 M35.6,0V27 M44.5,0V27 M53.4,0V27 M62.3,0V27 M71.2,0V27 M80.1,0V27" stroke="#dae9f2" stroke-width="1" fill="none"/><polyline points="0.0,25.6 1.0,25.1 2.0,23.6 3.0,21.1 4.0,17.6 4.9,13.0 5.9,7.5 6.9,0.9 7.9,4.5 8.9,6.4 9.9,0.1 10.9,-0.5 11.9,-0.5 12.9,-0.5 13.8,1.3 14.8,1.3 15.8,-0.5 16.8,-0.5 17.8,-0.5 18.8,-0.5 19.8,-0.5 20.8,-0.5 21.8,2.0 22.7,11.4 23.7,5.3 24.7,-0.5 25.7,-0.5 26.7,-0.5 27.7,15.6 28.7,24.6 29.7,26.2 30.7,26.2 31.6,26.2 32.6,26.2 33.6,26.2 34.6,26.2 35.6,26.2 36.6,24.7 37.6,16.0 38.6,8.1 39.6,9.7 40.5,1.6 41.5,-0.5 42.5,-0.5 43.5,-0.5 44.5,-0.5 45.5,0.7 46.5,1.9 47.5,0.0 48.5,-0.5 49.4,1.4 50.4,6.7 51.4,2.3 52.4,5.7 53.4,9.1 54.4,0.7 55.4,-0.5 56.4,-0.5 57.4,9.1 58.3,22.2 59.3,26.1 60.3,26.2 61.3,26.2 62.3,26.2 63.3,26.2 64.3,26.2 65.3,26.0 66.3,21.5 67.2,7.5 68.2,-0.5 69.2,-0.5 70.2,10.6 71.2,15.2 72.2,0.9 73.2,-0.5 74.2,2.1 75.2,3.5 76.1,0.0 77.1,-0.5 78.1,-0.5 79.1,-0.5 80.1,-0.5 81.1,-0.5 82.1,-0.5 83.1,-0.5 84.1,6.2 85.0,24.3 86.0,8.8 87.0,-0.5 88.0,-0.5 89.0,-0.5" fill="none" stroke="#1b77b0" stroke-width="1.25" stroke-linejoin="round"/></svg></div><div style="position:absolute;left:226.5px;top:207.3px;width:91.5px;height:30px;border:1.5px solid #3d7fa8;box-sizing:border-box;overflow:hidden"><svg width="89" height="27" style="position:absolute;left:0;top:0"><rect width="89" height="27" fill="#f4f9fc"/><path d="M0,5.4H89 M0,10.8H89 M0,16.2H89 M0,21.6H89 M8.9,0V27 M17.8,0V27 M26.7,0V27 M35.6,0V27 M44.5,0V27 M53.4,0V27 M62.3,0V27 M71.2,0V27 M80.1,0V27" stroke="#dae9f2" stroke-width="1" fill="none"/><polyline points="0.0,25.6 1.0,16.0 2.0,23.6 3.0,21.1 4.0,17.6 4.9,13.0 5.9,16.0 6.9,0.9 7.9,-0.5 8.9,-0.5 9.9,-0.5 10.9,-0.5 11.9,10.1 12.9,13.6 13.8,14.6 14.8,5.1 15.8,-0.5 16.8,-0.5 17.8,-0.5 18.8,-0.5 19.8,9.9 20.8,20.5 21.8,3.8 22.7,-0.5 23.7,-0.5 24.7,-0.5 25.7,16.0 26.7,24.8 27.7,26.2 28.7,26.2 29.7,26.2 30.7,26.2 31.6,26.2 32.6,26.2 33.6,26.2 34.6,24.6 35.6,15.6 36.6,-0.5 37.6,0.8 38.6,18.0 39.6,13.3 40.5,-0.5 41.5,-0.5 42.5,2.9 43.5,17.2 44.5,8.6 45.5,5.5 46.5,-0.5 47.5,-0.5 48.5,-0.5 49.4,-0.5 50.4,-0.5 51.4,-0.5 52.4,7.5 53.4,15.6 54.4,2.8 55.4,-0.5 56.4,-0.5 57.4,-0.5 58.3,-0.5 59.3,12.3 60.3,23.5 61.3,26.2 62.3,26.2 63.3,26.2 64.3,26.2 65.3,26.2 66.3,26.2 67.2,25.7 68.2,19.8 69.2,11.3 70.2,14.6 71.2,0.3 72.2,-0.5 73.2,-0.5 74.2,2.7 75.2,3.1 76.1,-0.5 77.1,-0.5 78.1,-0.5 79.1,-0.5 80.1,-0.5 81.1,0.7 82.1,12.3 83.1,8.6 84.1,-0.5 85.0,-0.5 86.0,-0.5 87.0,-0.5 88.0,-0.5 89.0,-0.5" fill="none" stroke="#1b77b0" stroke-width="1.25" stroke-linejoin="round"/></svg></div><div style="position:absolute;left:321.3px;top:207.3px;width:91.5px;height:30px;border:1.5px solid #3d7fa8;box-sizing:border-box;overflow:hidden"><svg width="89" height="27" style="position:absolute;left:0;top:0"><rect width="89" height="27" fill="#f4f9fc"/><path d="M0,5.4H89 M0,10.8H89 M0,16.2H89 M0,21.6H89 M8.9,0V27 M17.8,0V27 M26.7,0V27 M35.6,0V27 M44.5,0V27 M53.4,0V27 M62.3,0V27 M71.2,0V27 M80.1,0V27" stroke="#dae9f2" stroke-width="1" fill="none"/><polyline points="0.0,25.6 1.0,25.1 2.0,23.6 3.0,21.1 4.0,17.6 4.9,13.0 5.9,7.5 6.9,0.9 7.9,-0.5 8.9,-0.5 9.9,-0.5 10.9,-0.5 11.9,-0.5 12.9,-0.5 13.8,0.8 14.8,5.1 15.8,2.0 16.8,-0.5 17.8,-0.5 18.8,-0.5 19.8,9.8 20.8,23.3 21.8,5.2 22.7,-0.5 23.7,-0.5 24.7,4.6 25.7,20.3 26.7,25.8 27.7,26.2 28.7,26.2 29.7,26.2 30.7,26.2 31.6,26.2 32.6,26.2 33.6,26.1 34.6,22.5 35.6,9.8 36.6,-0.5 37.6,-0.5 38.6,-0.5 39.6,14.4 40.5,14.8 41.5,-0.5 42.5,-0.5 43.5,2.3 44.5,6.8 45.5,1.4 46.5,-0.5 47.5,-0.5 48.5,-0.5 49.4,-0.5 50.4,-0.5 51.4,-0.5 52.4,-0.5 53.4,6.9 54.4,7.3 55.4,-0.5 56.4,-0.5 57.4,-0.5 58.3,2.9 59.3,19.5 60.3,25.7 61.3,26.2 62.3,26.2 63.3,26.2 64.3,26.2 65.3,26.2 66.3,26.2 67.2,23.7 68.2,12.9 69.2,-0.5 70.2,-0.5 71.2,4.7 72.2,13.0 73.2,3.0 74.2,-0.5 75.2,-0.5 76.1,-0.4 77.1,2.3 78.1,1.8 79.1,-0.5 80.1,-0.5 81.1,-0.5 82.1,0.7 83.1,10.5 84.1,7.0 85.0,-0.5 86.0,-0.5 87.0,-0.5 88.0,-0.5 89.0,-0.5" fill="none" stroke="#1b77b0" stroke-width="1.25" stroke-linejoin="round"/></svg></div><div style="position:absolute;left:416.2px;top:207.3px;width:91.5px;height:30px;border:1.5px solid #3d7fa8;box-sizing:border-box;overflow:hidden"><svg width="89" height="27" style="position:absolute;left:0;top:0"><rect width="89" height="27" fill="#f4f9fc"/><path d="M0,5.4H89 M0,10.8H89 M0,16.2H89 M0,21.6H89 M8.9,0V27 M17.8,0V27 M26.7,0V27 M35.6,0V27 M44.5,0V27 M53.4,0V27 M62.3,0V27 M71.2,0V27 M80.1,0V27" stroke="#dae9f2" stroke-width="1" fill="none"/><polyline points="0.0,25.6 1.0,16.0 2.0,16.0 3.0,21.1 4.0,17.6 4.9,13.0 5.9,7.5 6.9,16.0 7.9,-0.5 8.9,-0.5 9.9,-0.5 10.9,-0.5 11.9,-0.5 12.9,-0.5 13.8,-0.5 14.8,3.5 15.8,4.7 16.8,-0.2 17.8,-0.5 18.8,-0.5 19.8,-0.5 20.8,-0.5 21.8,5.9 22.7,13.6 23.7,2.7 24.7,-0.5 25.7,-0.5 26.7,-0.5 27.7,-0.5 28.7,11.8 29.7,23.3 30.7,26.2 31.6,26.2 32.6,26.2 33.6,26.2 34.6,26.2 35.6,26.2 36.6,26.2 37.6,25.6 38.6,19.1 39.6,2.1 40.5,5.9 41.5,18.0 42.5,13.2 43.5,1.6 44.5,5.4 45.5,3.1 46.5,-0.5 47.5,-0.5 48.5,-0.5 49.4,-0.5 50.4,-0.5 51.4,1.8 52.4,12.3 53.4,6.5 54.4,-0.5 55.4,-0.5 56.4,-0.5 57.4,-0.5 58.3,2.4 59.3,6.6 60.3,1.3 61.3,11.3 62.3,23.1 63.3,26.2 64.3,26.2 65.3,26.2 66.3,26.2 67.2,26.2 68.2,26.2 69.2,25.9 70.2,20.4 71.2,5.0 72.2,0.6 73.2,5.9 74.2,3.1 75.2,-0.5 76.1,-0.5 77.1,2.8 78.1,10.7 79.1,3.1 80.1,-0.5 81.1,-0.5 82.1,-0.5 83.1,5.1 84.1,16.2 85.0,4.3 86.0,-0.5 87.0,-0.5 88.0,-0.5 89.0,-0.5" fill="none" stroke="#1b77b0" stroke-width="1.25" stroke-linejoin="round"/></svg></div><div style="position:absolute;left:510.5px;top:207.3px;width:91.5px;height:30px;border:1.5px solid #3d7fa8;box-sizing:border-box;overflow:hidden"><svg width="89" height="27" style="position:absolute;left:0;top:0"><rect width="89" height="27" fill="#f4f9fc"/><path d="M0,5.4H89 M0,10.8H89 M0,16.2H89 M0,21.6H89 M8.9,0V27 M17.8,0V27 M26.7,0V27 M35.6,0V27 M44.5,0V27 M53.4,0V27 M62.3,0V27 M71.2,0V27 M80.1,0V27" stroke="#dae9f2" stroke-width="1" fill="none"/><polyline points="0.0,25.6 1.0,25.1 2.0,16.0 3.0,21.1 4.0,17.6 4.9,13.0 5.9,7.5 6.9,0.9 7.9,-0.5 8.9,-0.5 9.9,-0.5 10.9,-0.5 11.9,-0.5 12.9,-0.5 13.8,1.8 14.8,8.2 15.8,2.9 16.8,-0.5 17.8,-0.5 18.8,-0.5 19.8,-0.5 20.8,-0.5 21.8,-0.5 22.7,-0.1 23.7,13.9 24.7,11.3 25.7,-0.5 26.7,-0.5 27.7,17.3 28.7,25.1 29.7,26.2 30.7,26.2 31.6,26.2 32.6,26.2 33.6,26.2 34.6,26.2 35.6,26.2 36.6,24.1 37.6,14.1 38.6,-0.5 39.6,3.8 40.5,10.0 41.5,2.1 42.5,-0.5 43.5,-0.5 44.5,-0.5 45.5,3.2 46.5,7.6 47.5,1.3 48.5,-0.5 49.4,-0.5 50.4,-0.5 51.4,-0.5 52.4,-0.5 53.4,0.6 54.4,9.3 55.4,10.0 56.4,14.1 57.4,0.8 58.3,9.9 59.3,22.5 60.3,26.1 61.3,26.2 62.3,26.2 63.3,26.2 64.3,26.2 65.3,26.2 66.3,26.0 67.2,21.2 68.2,6.6 69.2,17.5 70.2,7.9 71.2,-0.5 72.2,-0.5 73.2,-0.5 74.2,-0.5 75.2,-0.5 76.1,-0.2 77.1,1.7 78.1,0.9 79.1,-0.5 80.1,-0.5 81.1,-0.5 82.1,-0.5 83.1,-0.5 84.1,-0.5 85.0,-0.5 86.0,13.5 87.0,19.6 88.0,1.5 89.0,-0.5" fill="none" stroke="#1b77b0" stroke-width="1.25" stroke-linejoin="round"/></svg></div><div style="position:absolute;left:226.5px;top:241.3px;width:91.5px;height:30px;border:1.5px solid #3d7fa8;box-sizing:border-box;overflow:hidden"><svg width="89" height="27" style="position:absolute;left:0;top:0"><rect width="89" height="27" fill="#f4f9fc"/><path d="M0,5.4H89 M0,10.8H89 M0,16.2H89 M0,21.6H89 M8.9,0V27 M17.8,0V27 M26.7,0V27 M35.6,0V27 M44.5,0V27 M53.4,0V27 M62.3,0V27 M71.2,0V27 M80.1,0V27" stroke="#dae9f2" stroke-width="1" fill="none"/><polyline points="0.0,25.6 1.0,16.0 2.0,23.6 3.0,21.1 4.0,17.6 4.9,16.0 5.9,16.0 6.9,0.9 7.9,-0.5 8.9,-0.5 9.9,-0.5 10.9,-0.5 11.9,-0.5 12.9,-0.5 13.8,1.4 14.8,9.0 15.8,4.2 16.8,-0.5 17.8,-0.5 18.8,-0.5 19.8,-0.5 20.8,-0.5 21.8,1.5 22.7,11.7 23.7,6.5 24.7,4.2 25.7,20.0 26.7,25.8 27.7,26.2 28.7,26.2 29.7,26.2 30.7,26.2 31.6,26.2 32.6,26.2 33.6,26.1 34.6,22.7 35.6,10.2 36.6,-0.5 37.6,-0.5 38.6,4.0 39.6,11.7 40.5,2.8 41.5,-0.5 42.5,-0.5 43.5,-0.5 44.5,-0.5 45.5,-0.5 46.5,1.2 47.5,8.2 48.5,3.9 49.4,-0.5 50.4,-0.5 51.4,-0.5 52.4,-0.5 53.4,13.3 54.4,12.1 55.4,-0.5 56.4,-0.5 57.4,-0.5 58.3,-0.5 59.3,-0.5 60.3,16.1 61.3,24.8 62.3,26.2 63.3,26.2 64.3,26.2 65.3,26.2 66.3,26.2 67.2,26.2 68.2,25.0 69.2,16.8 70.2,7.8 71.2,-0.5 72.2,-0.5 73.2,-0.5 74.2,5.8 75.2,14.5 76.1,3.1 77.1,-0.5 78.1,-0.5 79.1,-0.5 80.1,-0.5 81.1,-0.5 82.1,16.1 83.1,16.7 84.1,-0.5 85.0,-0.5 86.0,-0.5 87.0,-0.5 88.0,-0.5 89.0,-0.5" fill="none" stroke="#1b77b0" stroke-width="1.25" stroke-linejoin="round"/></svg></div><div style="position:absolute;left:321.3px;top:241.3px;width:91.5px;height:30px;border:1.5px solid #3d7fa8;box-sizing:border-box;overflow:hidden"><svg width="89" height="27" style="position:absolute;left:0;top:0"><rect width="89" height="27" fill="#f4f9fc"/><path d="M0,5.4H89 M0,10.8H89 M0,16.2H89 M0,21.6H89 M8.9,0V27 M17.8,0V27 M26.7,0V27 M35.6,0V27 M44.5,0V27 M53.4,0V27 M62.3,0V27 M71.2,0V27 M80.1,0V27" stroke="#dae9f2" stroke-width="1" fill="none"/><polyline points="0.0,16.0 1.0,25.1 2.0,23.6 3.0,21.1 4.0,17.6 4.9,16.0 5.9,7.5 6.9,0.9 7.9,-0.5 8.9,-0.5 9.9,-0.5 10.9,10.2 11.9,13.1 12.9,1.3 13.8,9.1 14.8,4.6 15.8,-0.5 16.8,-0.5 17.8,-0.5 18.8,-0.5 19.8,-0.5 20.8,-0.5 21.8,1.5 22.7,19.7 23.7,13.4 24.7,-0.5 25.7,8.6 26.7,22.0 27.7,26.1 28.7,26.2 29.7,26.2 30.7,26.2 31.6,26.2 32.6,26.2 33.6,26.2 34.6,25.9 35.6,20.9 36.6,6.0 37.6,0.6 38.6,8.0 39.6,4.9 40.5,-0.5 41.5,-0.5 42.5,-0.5 43.5,-0.5 44.5,6.0 45.5,7.0 46.5,-0.5 47.5,-0.5 48.5,-0.5 49.4,-0.5 50.4,0.9 51.4,14.7 52.4,10.2 53.4,-0.5 54.4,-0.5 55.4,-0.5 56.4,-0.5 57.4,-0.5 58.3,16.3 59.3,24.8 60.3,26.2 61.3,26.2 62.3,26.2 63.3,26.2 64.3,26.2 65.3,26.2 66.3,24.9 67.2,16.7 68.2,-0.5 69.2,3.0 70.2,12.8 71.2,4.5 72.2,-0.5 73.2,-0.5 74.2,-0.5 75.2,-0.5 76.1,-0.5 77.1,3.6 78.1,10.3 79.1,2.3 80.1,-0.5 81.1,1.0 82.1,12.7 83.1,8.4 84.1,-0.5 85.0,-0.5 86.0,-0.5 87.0,-0.5 88.0,-0.5 89.0,-0.5" fill="none" stroke="#1b77b0" stroke-width="1.25" stroke-linejoin="round"/></svg></div><div style="position:absolute;left:416.2px;top:241.3px;width:91.5px;height:30px;border:1.5px solid #3d7fa8;box-sizing:border-box;overflow:hidden"><svg width="89" height="27" style="position:absolute;left:0;top:0"><rect width="89" height="27" fill="#f4f9fc"/><path d="M0,5.4H89 M0,10.8H89 M0,16.2H89 M0,21.6H89 M8.9,0V27 M17.8,0V27 M26.7,0V27 M35.6,0V27 M44.5,0V27 M53.4,0V27 M62.3,0V27 M71.2,0V27 M80.1,0V27" stroke="#dae9f2" stroke-width="1" fill="none"/><polyline points="0.0,25.6 1.0,25.1 2.0,23.6 3.0,21.1 4.0,17.6 4.9,13.0 5.9,16.0 6.9,0.9 7.9,-0.5 8.9,-0.5 9.9,-0.5 10.9,-0.5 11.9,-0.5 12.9,6.8 13.8,7.3 14.8,-0.5 15.8,-0.5 16.8,4.8 17.8,15.7 18.8,4.3 19.8,-0.5 20.8,-0.5 21.8,4.1 22.7,22.3 23.7,10.8 24.7,-0.5 25.7,0.2 26.7,18.1 27.7,25.4 28.7,26.2 29.7,26.2 30.7,26.2 31.6,26.2 32.6,26.2 33.6,26.2 34.6,26.2 35.6,23.8 36.6,13.1 37.6,0.1 38.6,14.2 39.6,11.4 40.5,-0.5 41.5,-0.5 42.5,-0.5 43.5,-0.5 44.5,-0.5 45.5,-0.5 46.5,1.8 47.5,1.9 48.5,-0.5 49.4,-0.5 50.4,-0.5 51.4,-0.5 52.4,-0.5 53.4,6.9 54.4,15.0 55.4,2.8 56.4,-0.5 57.4,-0.5 58.3,-0.5 59.3,-0.5 60.3,7.3 61.3,21.5 62.3,26.0 63.3,26.2 64.3,26.2 65.3,26.2 66.3,26.2 67.2,26.2 68.2,26.1 69.2,22.3 70.2,9.2 71.2,-0.5 72.2,-0.5 73.2,-0.5 74.2,-0.5 75.2,-0.5 76.1,-0.5 77.1,0.7 78.1,5.7 79.1,2.8 80.1,-0.5 81.1,-0.5 82.1,-0.2 83.1,17.6 84.1,14.8 85.0,-0.5 86.0,-0.5 87.0,-0.5 88.0,-0.5 89.0,-0.5" fill="none" stroke="#1b77b0" stroke-width="1.25" stroke-linejoin="round"/></svg></div><div style="position:absolute;left:510.5px;top:241.3px;width:91.5px;height:30px;border:1.5px solid #3d7fa8;box-sizing:border-box;overflow:hidden"><svg width="89" height="27" style="position:absolute;left:0;top:0"><rect width="89" height="27" fill="#f4f9fc"/><path d="M0,5.4H89 M0,10.8H89 M0,16.2H89 M0,21.6H89 M8.9,0V27 M17.8,0V27 M26.7,0V27 M35.6,0V27 M44.5,0V27 M53.4,0V27 M62.3,0V27 M71.2,0V27 M80.1,0V27" stroke="#dae9f2" stroke-width="1" fill="none"/><polyline points="0.0,25.6 1.0,25.1 2.0,23.6 3.0,21.1 4.0,17.6 4.9,13.0 5.9,16.0 6.9,0.9 7.9,-0.5 8.9,-0.5 9.9,-0.5 10.9,-0.5 11.9,-0.5 12.9,-0.5 13.8,-0.5 14.8,-0.5 15.8,-0.4 16.8,1.5 17.8,1.1 18.8,-0.5 19.8,-0.5 20.8,-0.5 21.8,3.0 22.7,17.4 23.7,9.9 24.7,-0.5 25.7,-0.5 26.7,-0.5 27.7,-0.5 28.7,-0.5 29.7,15.3 30.7,24.5 31.6,26.2 32.6,26.2 33.6,26.2 34.6,26.2 35.6,26.2 36.6,26.2 37.6,26.2 38.6,24.9 39.6,16.3 40.5,-0.5 41.5,-0.5 42.5,-0.5 43.5,-0.5 44.5,-0.5 45.5,0.4 46.5,6.9 47.5,8.9 48.5,-0.0 49.4,-0.5 50.4,-0.5 51.4,-0.5 52.4,-0.5 53.4,-0.5 54.4,1.5 55.4,11.9 56.4,6.7 57.4,-0.5 58.3,6.9 59.3,21.3 60.3,26.0 61.3,26.2 62.3,26.2 63.3,26.2 64.3,26.2 65.3,26.2 66.3,26.1 67.2,22.4 68.2,9.7 69.2,-0.5 70.2,-0.5 71.2,3.5 72.2,10.5 73.2,2.5 74.2,-0.1 75.2,3.4 76.1,2.3 77.1,-0.5 78.1,-0.5 79.1,-0.5 80.1,-0.5 81.1,-0.5 82.1,-0.5 83.1,-0.5 84.1,-0.5 85.0,5.5 86.0,23.6 87.0,9.5 88.0,-0.5 89.0,-0.5" fill="none" stroke="#1b77b0" stroke-width="1.25" stroke-linejoin="round"/></svg></div>
  <div class="lbl" style="left:226px;top:296px">Utilization</div>
  <div class="lbl" style="left:294px;top:296px">Speed</div>
  <div class="big" style="left:225px;top:315px">100%</div>
  <div class="big" style="left:293px;top:315px">4.68 GHz</div>
  <div class="lbl" style="left:226px;top:344px">Processes</div>
  <div class="lbl" style="left:293px;top:344px">Threads</div>
  <div class="lbl" style="left:353px;top:344px">Handles</div>
  <div class="big" style="left:225px;top:363px">223</div>
  <div class="big" style="left:292px;top:363px">3357</div>
  <div class="big" style="left:352px;top:363px">93632</div>
  <div class="lbl" style="left:226px;top:392px">Up time</div>
  <div class="big" style="left:225px;top:411px">4:07:43:59</div>
  <div class="lbl" style="left:415.6px;top:295.0px">Maximum speed:</div><div class="val" style="left:523px;top:295.0px">3.60 GHz</div><div class="lbl" style="left:415.6px;top:312.0px">Sockets:</div><div class="val" style="left:523px;top:312.0px">1</div><div class="lbl" style="left:415.6px;top:329.0px">Cores:</div><div class="val" style="left:523px;top:329.0px">8</div><div class="lbl" style="left:415.6px;top:346.0px">Logical processors:</div><div class="val" style="left:523px;top:346.0px">16</div><div class="lbl" style="left:415.6px;top:363.0px">Virtualization:</div><div class="val" style="left:523px;top:363.0px">Enabled</div><div class="lbl" style="left:415.6px;top:379.5px">L1 cache:</div><div class="val" style="left:523px;top:379.5px">512 KB</div><div class="lbl" style="left:415.6px;top:396.7px">L2 cache:</div><div class="val" style="left:523px;top:396.7px">2.0 MB</div><div class="lbl" style="left:415.6px;top:413.6px">L3 cache:</div><div class="val" style="left:523px;top:413.6px">16.0 MB</div>
  <svg width="20" height="20" style="position:absolute;left:7px;top:464px"><circle cx="10" cy="10" r="8.5" fill="none" stroke="#9a9a9a" stroke-width="1"/><path d="M6,12 L10,8 L14,12" stroke="#555" stroke-width="1.1" fill="none"/></svg>
  <div style="left:33px;top:466px;font-size:11px;line-height:14px">Fewer details</div>
  <div style="left:105px;top:465px;width:1px;height:15px;background:#d0d0d0"></div>
  <svg width="18" height="18" style="position:absolute;left:111px;top:464px"><circle cx="9" cy="9" r="7" fill="#fff" stroke="#888" stroke-width="1.5"/><path d="M5,5 L10,11" stroke="#c01818" stroke-width="2"/></svg>
  <div style="left:133px;top:466px;font-size:11.2px;line-height:14px;color:#1c5a94">Open Resource Monitor</div>
</div>

<div class="abs" style="left:199px;top:672px;font-size:10.3px;line-height:14px;color:#fff;text-shadow:1px 1px 0 #111,1px 0 0 #222,0 1px 0 #222;white-space:nowrap;letter-spacing:-0.15px">PhoenixFD Simulation Running: [STEP 1/1][FRAME 4/321]</div>

<div id="rp">
  <div style="left:0;top:0;width:4px;height:729px;background:#3b3d42"></div>
  <div style="left:9px;top:2px;width:171px;height:17px;background:#5a5a5a;font-size:10px;line-height:18px;padding-left:2px;color:#e0e0e0">PhoenixFDLiquid001</div>
  <div style="left:185px;top:2px;width:12px;height:17px;background:#7d7cf0"></div>
  <div style="left:9px;top:29px;width:190px;height:18px;background:#5c5c5c;font-size:10.5px;line-height:19px;padding-left:2px;color:#e4e4e4">Modifier List</div>
  <div class="btn dis" style="left:11px;top:58px;width:92px">Edit Spline</div>
  <div class="btn" style="left:108px;top:58px;width:90px">Edit Poly</div>
  <div class="btn dis" style="left:11px;top:80px;width:92px">Extrude</div>
  <div class="btn" style="left:108px;top:80px;width:90px">FFD 2x2x2</div>
  <div class="btn dis" style="left:11px;top:101px;width:92px">Lathe</div>
  <div class="btn" style="left:108px;top:101px;width:90px">Noise</div>
  <div class="btn dis" style="left:11px;top:123px;width:92px">Sweep</div>
  <div class="btn" style="left:108px;top:123px;width:90px">Shell</div>
  <div class="btn" style="left:11px;top:144px;width:92px">Material</div>
  <div class="btn" style="left:108px;top:144px;width:90px">Slice</div>
  <div class="btn" style="left:11px;top:166px;width:92px">UVW Map</div>
  <div class="btn" style="left:108px;top:166px;width:90px">Symmetry</div>
  <div class="btn" style="left:11px;top:187px;width:92px">Smooth</div>
  <div class="btn" style="left:108px;top:187px;width:90px">TurboSmooth</div>
  <div class="btn" style="left:11px;top:210px;width:91px">Unwrap UVW</div>
  <div class="btn" style="left:104px;top:210px;width:54px;background:#505050"></div>
  <div style="left:8.5px;top:234.5px;width:190px;height:94px;border:1.5px solid #f0f0f0;background:#454545"></div>
  <div style="left:10px;top:236px;width:190px;height:17px;background:#5b87c0;font-size:10.5px;line-height:17px;padding-left:20px;color:#f4f4f4">Object</div>
  <svg width="194" height="30" style="position:absolute;left:0;top:330px">
    <path d="M13,22 L19,16" stroke="#e8e8e8" stroke-width="1.4"/><path d="M17,12 L23,18 L21,19 L17,15 L15,15 Z" fill="#e8e8e8"/><path d="M19,9 L26,16 L23,18 L17,12 Z" fill="#f0f0f0"/>
    <path d="M37,7 V21 M71,7 V21 M128,7 V21" stroke="#111" stroke-width="1.6"/>
    <rect x="42.5" y="5" width="21.5" height="20.5" rx="2" fill="#5d8ac4"/>
    <path d="M50,9 H56 M51,9 V20 Q53,23 55,20 V9" stroke="#dff" stroke-width="1.2" fill="#7fc8c8"/>
    <circle cx="83" cy="12" r="3.5" fill="none" stroke="#222" stroke-width="1.3"/><circle cx="89" cy="15" r="3.5" fill="none" stroke="#222" stroke-width="1.3"/><circle cx="86" cy="20" r="3.5" fill="none" stroke="#222" stroke-width="1.3"/>
    <path d="M105,10 H115 M106,11 L107,22 H113 L114,11 M108,13 V20 M110,13 V20 M112,13 V20" stroke="#222" stroke-width="1.2" fill="none"/>
    <rect x="137" y="9" width="11" height="12" fill="#eee" stroke="#222" stroke-width="1"/><path d="M139,12 h3 v3 h-3z M143,17 h3 v3 h-3z M139,17 h3 v3 h-3z" stroke="#222" stroke-width="0.8" fill="none"/><path d="M141,18 L150,8" stroke="#e8b020" stroke-width="2"/>
  </svg>
  <div style="left:13px;top:371px;width:181px;height:3px;background:#363636;border-radius:2px;border-bottom:1px solid #505050"></div>
  <div style="left:96px;top:370px;width:14px;height:4px;background:repeating-linear-gradient(90deg,#aaa 0 1px,#444 1px 2px)"></div>
  <div style="left:8px;top:380px;width:186px;height:349px;background:#515151"></div>
  <svg width="10" height="10" style="position:absolute;left:14px;top:385px"><path d="M1,2 L7,2 L4,6 Z" fill="#ccc"/></svg>
  <div style="left:26px;top:382px;font-size:11px;line-height:14px;font-weight:bold;color:#f2f2f2">Simulation</div>
  <div style="left:181px;top:384px;width:7px;height:7px;background:repeating-linear-gradient(90deg,#666 0 3px,#4e4e4e 3px 4px)"></div>
  <div class="sbtn dis" style="left:29px;top:401px;width:65px;height:20px;line-height:20px">Start</div>
  <div class="sbtn" style="left:96px;top:401px;width:38px;height:20px;line-height:20px">Pause</div>
  <div class="sbtn" style="left:135px;top:401px;width:40px;height:20px;line-height:20px">Stop</div>
  <div class="sbtn dis" style="left:29px;top:424px;width:65px;height:17px;line-height:17px">Load &amp; Start</div>
  <div class="sbtn" style="left:96px;top:424px;width:79px;height:17px;line-height:17px">Preferences...</div>
  <div class="sbtn dis" style="left:29px;top:443px;width:65px;height:18px">Restore</div>
  <div class="sbtn" style="left:96px;top:443px;width:38px;height:18px">?</div>
  <div class="sbtn" style="left:135px;top:443px;width:40px;height:18px">About</div>
  <div class="sbtn" style="left:29px;top:467px;width:145px;height:17px;line-height:17px">Simulation Presets...</div>
  <div class="lab" style="left:30px;top:490px">Start Frame</div>
  <div class="spin" style="left:124px;top:491px;width:46px">-100</div>
  <div class="lab" style="left:30px;top:510px">Stop Frame</div>
  <div class="spin" style="left:124px;top:511px;width:46px">220</div>
  <div style="left:32px;top:536px;width:9px;height:9px;background:#5a5a5a"></div>
  <div class="lab" style="left:43px;top:533px">Use Script</div>
  <div class="sbtn" style="left:102px;top:532px;width:68px;height:17px;line-height:17px">Edit...</div>
  <div class="lab" style="left:31px;top:554px">Threads Limit</div>
  <div class="spin" style="left:124px;top:553px;width:46px">0</div>
<svg width="6" height="10" style="position:absolute;left:163px;top:494px"><path d="M0.5,4 L3,1 L5.5,4 Z M0.5,6 L3,9 L5.5,6 Z" fill="#e0e0e0"/></svg><svg width="6" height="10" style="position:absolute;left:163px;top:514px"><path d="M0.5,4 L3,1 L5.5,4 Z M0.5,6 L3,9 L5.5,6 Z" fill="#e0e0e0"/></svg><svg width="6" height="10" style="position:absolute;left:163px;top:556px"><path d="M0.5,4 L3,1 L5.5,4 Z M0.5,6 L3,9 L5.5,6 Z" fill="#e0e0e0"/></svg>
  <div class="lab" style="left:32px;top:574px">NUMA Nodes:</div>
  <div style="left:31px;top:590px;width:141px;height:27px;border:1.5px solid #eee;border-bottom:none;background:#4a4a4a;font-size:10.5px;line-height:14px;color:#707070;padding-left:2px">Only a single node available.</div>
  <div style="left:28px;top:622px;width:146px;height:107px;border:1px solid #3a3a3a;background:#4b4b4b"></div>
  <div class="lab" style="left:32px;top:628px">Total Elapsed</div><div class="lab" style="left:100px;top:628px;width:70px;text-align:right">1m 29s</div>
  <div class="lab" style="left:32px;top:644px">Estimated Time Left</div><div class="lab" style="left:100px;top:644px;width:70px;text-align:right">1h 58m</div>
  <div class="lab" style="left:32px;top:659px">Frame Elapsed</div><div class="lab" style="left:100px;top:659px;width:70px;text-align:right">21.0s</div>
  <div class="lab" style="left:32px;top:674px">Performance</div><div class="lab" style="left:90px;top:674px;width:80px;text-align:right">18.67M C/s</div>
  <div class="lab" style="left:32px;top:689px">Required RAM</div><div class="lab" style="left:90px;top:689px;width:80px;text-align:right">17228.8 MB</div>
  <div class="lab" style="left:32px;top:705px">Frame</div>
  <div style="left:76px;top:706px;width:96px;height:12px;background:#16a82c;border:1px solid #d0d0d0"></div>
  <div style="left:76px;top:722px;width:96px;height:8px;background:#eee"></div>
  <div class="lab" style="left:32px;top:721px;height:8px;overflow:hidden">Total</div>
</div>
</body></html>
